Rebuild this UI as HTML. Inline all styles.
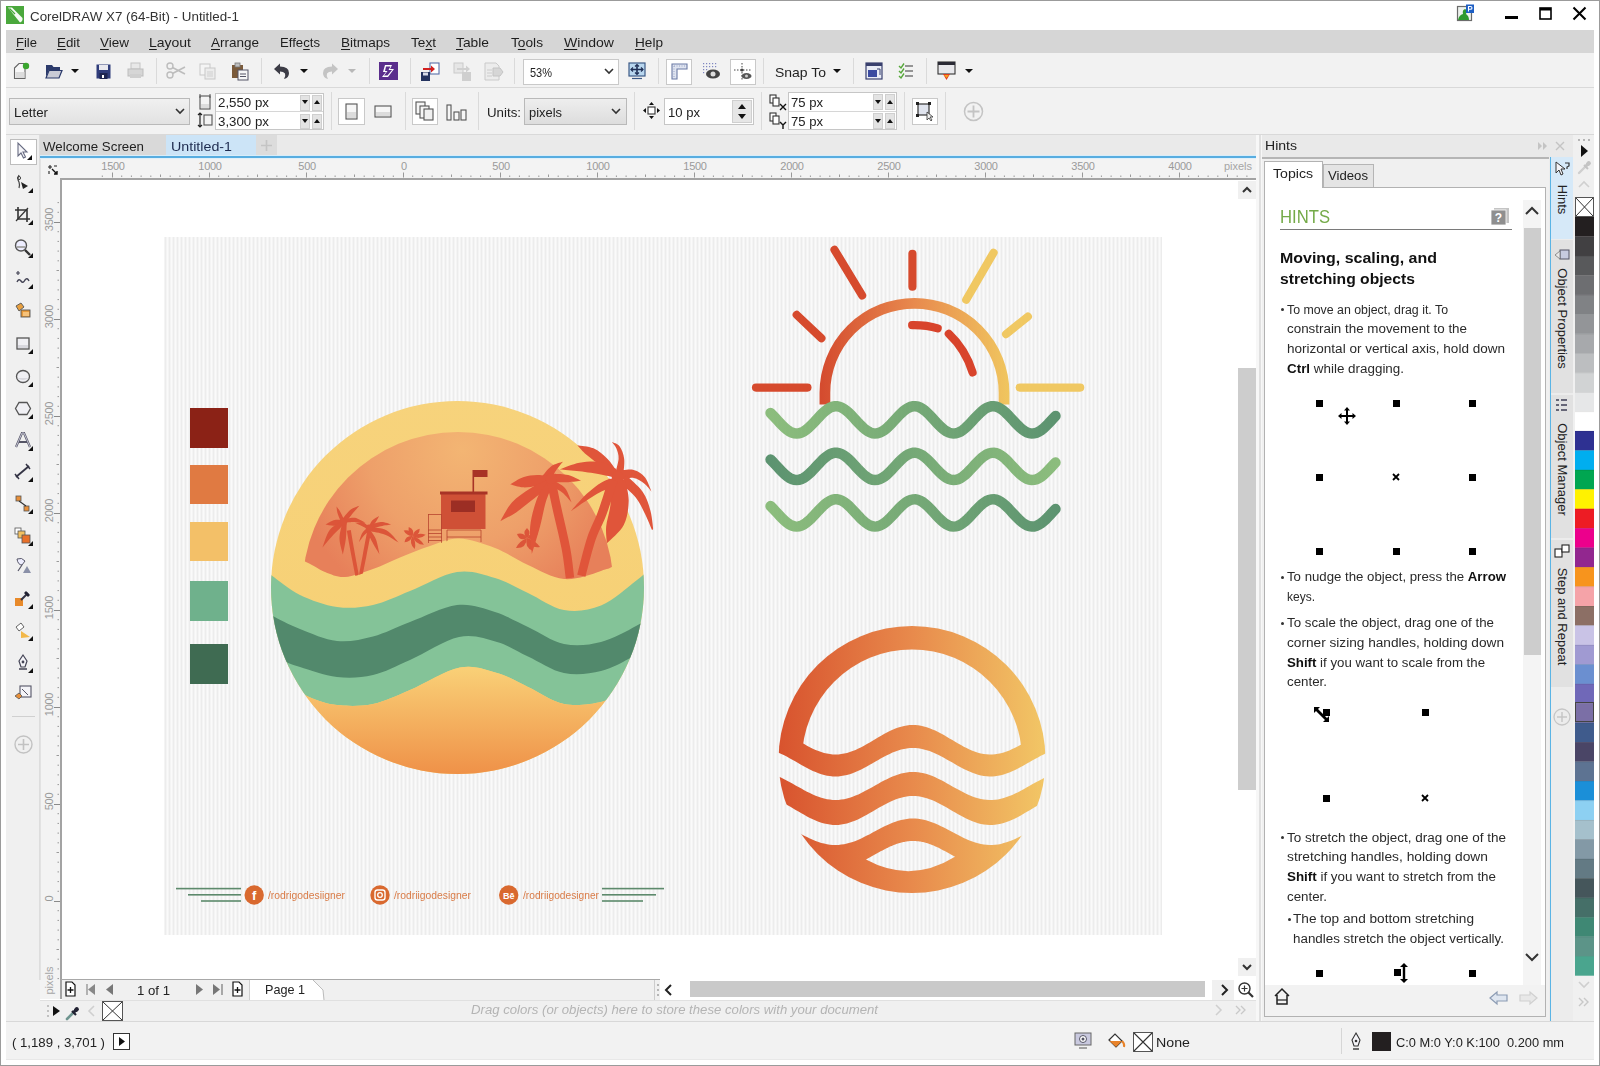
<!DOCTYPE html><html><head><meta charset="utf-8"><style>
html,body{margin:0;padding:0;}
body{width:1600px;height:1066px;position:relative;overflow:hidden;background:#fff;font-family:"Liberation Sans",sans-serif;}
.a{position:absolute;}
.t{white-space:nowrap;transform-origin:0 0;}
svg{overflow:visible;}
</style></head><body>
<div class="a" style="left:0px;top:0px;width:1600px;height:1066px;background:#ffffff;"></div>
<div class="a" style="left:0px;top:0px;width:1600px;height:1px;background:#9b9b9b;"></div>
<div class="a" style="left:0px;top:0px;width:1px;height:1066px;background:#9b9b9b;"></div>
<div class="a" style="left:1599px;top:0px;width:1px;height:1066px;background:#9b9b9b;"></div>
<div class="a" style="left:0px;top:1065px;width:1600px;height:1px;background:#9b9b9b;"></div>
<svg class="a" style="left:6px;top:6px;" width="18" height="18" viewBox="0 0 18 18"><rect x="0" y="0" width="18" height="18" fill="#4aa83c"/><path d="M2 1.5 L6 1.5 L16.5 12 Q17 15 14 16.5 Z" fill="#ffffff" opacity="0.95"/><path d="M3.5 2.5 L9 8" stroke="#4aa83c" stroke-width="1.3"/></svg>
<div id="t0" class="a t" style="left:30px;top:9.60px;font-size:13px;line-height:13px;color:#333;transform:scaleX(1.0284);">CorelDRAW X7 (64-Bit) - Untitled-1</div>
<svg class="a" style="left:1456px;top:4px;" width="20" height="18" viewBox="0 0 20 18"><rect x="1.5" y="2.5" width="14" height="14" fill="#eef2ee" stroke="#6b6b6b" stroke-width="1.2"/><path d="M2,16 Q3,11 7,10 Q6,6 9,5 Q12,6 10,10 Q13,12 13,16 Z" fill="#2e9a2e"/><rect x="10" y="0.5" width="8" height="8.5" fill="#1e5fc4"/><path d="M12.5,7.5 L12.5,2.5 L14.5,2.5 Q16,2.5 16,4 Q16,5.3 14.5,5.3 L12.5,5.3" stroke="#fff" stroke-width="1.1" fill="none"/></svg>
<div class="a" style="left:1505px;top:16px;width:13px;height:3px;background:#000;"></div>
<svg class="a" style="left:1539px;top:7px;" width="13" height="13" viewBox="0 0 13 13"><rect x="1" y="1" width="11" height="11" fill="none" stroke="#000" stroke-width="1.6"/><rect x="1" y="1" width="11" height="2.5" fill="#000"/></svg>
<svg class="a" style="left:1572px;top:6px;" width="15" height="15" viewBox="0 0 15 15"><path d="M1.5 1.5 L13.5 13.5 M13.5 1.5 L1.5 13.5" stroke="#000" stroke-width="2.1"/></svg>
<div class="a" style="left:6px;top:30px;width:1588px;height:23px;background:#d6d6d6;"></div>
<div id="t1" class="a t" style="left:16px;top:35.67px;font-size:13.5px;line-height:13.5px;color:#1e1e1e;transform:scaleX(0.9648);"><u style="text-decoration-thickness:1px;text-underline-offset:2px;">F</u>ile</div>
<div id="t2" class="a t" style="left:57px;top:35.67px;font-size:13.5px;line-height:13.5px;color:#1e1e1e;transform:scaleX(0.9879);"><u style="text-decoration-thickness:1px;text-underline-offset:2px;">E</u>dit</div>
<div id="t3" class="a t" style="left:100px;top:35.67px;font-size:13.5px;line-height:13.5px;color:#1e1e1e;transform:scaleX(0.9989);"><u style="text-decoration-thickness:1px;text-underline-offset:2px;">V</u>iew</div>
<div id="t4" class="a t" style="left:149px;top:35.67px;font-size:13.5px;line-height:13.5px;color:#1e1e1e;transform:scaleX(1.0358);"><u style="text-decoration-thickness:1px;text-underline-offset:2px;">L</u>ayout</div>
<div id="t5" class="a t" style="left:211px;top:35.67px;font-size:13.5px;line-height:13.5px;color:#1e1e1e;transform:scaleX(0.9990);"><u style="text-decoration-thickness:1px;text-underline-offset:2px;">A</u>rrange</div>
<div id="t6" class="a t" style="left:280px;top:35.67px;font-size:13.5px;line-height:13.5px;color:#1e1e1e;transform:scaleX(0.9745);">Effe<u style="text-decoration-thickness:1px;text-underline-offset:2px;">c</u>ts</div>
<div id="t7" class="a t" style="left:341px;top:35.67px;font-size:13.5px;line-height:13.5px;color:#1e1e1e;transform:scaleX(1.0045);"><u style="text-decoration-thickness:1px;text-underline-offset:2px;">B</u>itmaps</div>
<div id="t8" class="a t" style="left:411px;top:35.67px;font-size:13.5px;line-height:13.5px;color:#1e1e1e;transform:scaleX(1.0088);">Te<u style="text-decoration-thickness:1px;text-underline-offset:2px;">x</u>t</div>
<div id="t9" class="a t" style="left:456px;top:35.67px;font-size:13.5px;line-height:13.5px;color:#1e1e1e;transform:scaleX(1.0223);"><u style="text-decoration-thickness:1px;text-underline-offset:2px;">T</u>able</div>
<div id="t10" class="a t" style="left:511px;top:35.67px;font-size:13.5px;line-height:13.5px;color:#1e1e1e;transform:scaleX(1.0149);">T<u style="text-decoration-thickness:1px;text-underline-offset:2px;">o</u>ols</div>
<div id="t11" class="a t" style="left:564px;top:35.67px;font-size:13.5px;line-height:13.5px;color:#1e1e1e;transform:scaleX(1.0410);"><u style="text-decoration-thickness:1px;text-underline-offset:2px;">W</u>indow</div>
<div id="t12" class="a t" style="left:635px;top:35.67px;font-size:13.5px;line-height:13.5px;color:#1e1e1e;transform:scaleX(1.0084);"><u style="text-decoration-thickness:1px;text-underline-offset:2px;">H</u>elp</div>
<div class="a" style="left:6px;top:53px;width:1588px;height:34px;background:#f2f2f2;"></div>
<div class="a" style="left:6px;top:87px;width:1588px;height:1px;background:#d9d9d9;"></div>
<div class="a" style="left:6px;top:88px;width:1588px;height:46px;background:#f2f2f2;"></div>
<div class="a" style="left:6px;top:134px;width:1588px;height:1px;background:#d9d9d9;"></div>
<svg class="a" style="left:13px;top:62px;" width="17" height="18" viewBox="0 0 17 18"><path d="M1.5,6 L6,1.5 L12,1.5 L12,16.5 L1.5,16.5 Z" fill="#f7f7f7" stroke="#666" stroke-width="1.1"/><rect x="2.5" y="10" width="9" height="6" fill="#dcdcdc"/><circle cx="13" cy="4" r="3.2" fill="#3aa52e"/></svg>
<svg class="a" style="left:45px;top:63px;" width="18" height="16" viewBox="0 0 18 16"><path d="M1,2 L7,2 L8.5,4 L15,4 L15,7 L4,7 L1,14 Z" fill="#2b3a6b"/><path d="M1,15 L4,7.5 L17,7.5 L14,15 Z" fill="#c9cbd6" stroke="#2b3a6b" stroke-width="1.2"/></svg>
<svg class="a" style="left:71px;top:69px;" width="8" height="5" viewBox="0 0 8 5"><path d="M0,0 L8,0 L4,4 Z" fill="#111"/></svg>
<svg class="a" style="left:96px;top:64px;" width="15" height="15" viewBox="0 0 15 15"><rect x="0.5" y="0.5" width="14" height="14" fill="#2f3c7a"/><rect x="3" y="1" width="9" height="5" fill="#e8e8ee"/><rect x="3.5" y="9" width="8" height="6" fill="#1d2550"/><rect x="6" y="11" width="2" height="3" fill="#fff"/></svg>
<svg class="a" style="left:127px;top:62px;" width="17" height="17" viewBox="0 0 17 17"><rect x="4" y="1" width="9" height="6" fill="#e8e8e8" stroke="#c4c4c4"/><rect x="1" y="7" width="15" height="7" fill="#d6d6d6" stroke="#bdbdbd"/><rect x="3" y="12" width="11" height="4" fill="#cfcfcf"/></svg>
<div class="a" style="left:156px;top:58px;width:1px;height:26px;background:#dadada;"></div>
<svg class="a" style="left:166px;top:62px;" width="20" height="17" viewBox="0 0 20 17"><circle cx="4" cy="4" r="3" fill="none" stroke="#bdbdbd" stroke-width="1.4"/><circle cx="4" cy="13" r="3" fill="none" stroke="#bdbdbd" stroke-width="1.4"/><path d="M6.5,5.5 L19,12 M6.5,11.5 L19,5" stroke="#bdbdbd" stroke-width="1.6"/></svg>
<svg class="a" style="left:199px;top:63px;" width="18" height="17" viewBox="0 0 18 17"><rect x="1" y="1" width="10" height="11" fill="#f4f4f4" stroke="#c8c8c8"/><rect x="6" y="5" width="10" height="11" fill="#ececec" stroke="#c8c8c8"/><path d="M8,9 L14,9 M8,11 L14,11 M8,13 L14,13" stroke="#cfcfcf"/></svg>
<svg class="a" style="left:231px;top:62px;" width="18" height="18" viewBox="0 0 18 18"><rect x="1" y="3" width="11" height="13" fill="#7a5a3a"/><rect x="4" y="1" width="5" height="4" fill="#bfbfbf" stroke="#777" stroke-width="0.8"/><rect x="7" y="8" width="10" height="10" fill="#f6f6f6" stroke="#556" stroke-width="1"/><path d="M9,12 L15,12 M9,14.5 L15,14.5" stroke="#556"/></svg>
<div class="a" style="left:261px;top:58px;width:1px;height:26px;background:#dadada;"></div>
<svg class="a" style="left:272px;top:62px;" width="19" height="18" viewBox="0 0 19 18"><path d="M2,7 L8,1.5 L8,4.5 Q17,4.5 17,11 Q17,16 12,17 Q14,14 13,11.5 Q11.5,9.5 8,9.5 L8,12.5 Z" fill="#3c3c46"/></svg>
<svg class="a" style="left:300px;top:69px;" width="8" height="5" viewBox="0 0 8 5"><path d="M0,0 L8,0 L4,4 Z" fill="#111"/></svg>
<svg class="a" style="left:321px;top:62px;" width="19" height="18" viewBox="0 0 19 18"><path d="M17,7 L11,1.5 L11,4.5 Q2,4.5 2,11 Q2,16 7,17 Q5,14 6,11.5 Q7.5,9.5 11,9.5 L11,12.5 Z" fill="#c4c4c4"/></svg>
<svg class="a" style="left:348px;top:69px;" width="8" height="5" viewBox="0 0 8 5"><path d="M0,0 L8,0 L4,4 Z" fill="#b8b8b8"/></svg>
<div class="a" style="left:369px;top:58px;width:1px;height:26px;background:#dadada;"></div>
<svg class="a" style="left:379px;top:62px;" width="19" height="18" viewBox="0 0 19 18"><rect x="0" y="0" width="19" height="18" fill="#5a2d8c"/><path d="M6,3 L13,3 L11,7 L15,7 L9,15 L3,15 L7,10 L4,10 Z" fill="#fff"/><path d="M7,4.5 L11.5,4.5 L9.5,8 L13,8 L8.5,13.5 L5,13.5 L8.5,9 L6,9 Z" fill="#5a2d8c"/></svg>
<div class="a" style="left:410px;top:58px;width:1px;height:26px;background:#dadada;"></div>
<svg class="a" style="left:420px;top:62px;" width="21" height="19" viewBox="0 0 21 19"><rect x="10" y="1" width="9" height="11" fill="#fff" stroke="#5a6fa8" stroke-width="1.1"/><path d="M3,6 L11,6 L11,3.5 L15,7 L11,10.5 L11,8 L3,8 Z" fill="#d21f1f"/><rect x="1" y="10" width="9" height="9" fill="#24335f"/><rect x="3" y="10.5" width="5" height="3" fill="#d8dbe8"/></svg>
<svg class="a" style="left:452px;top:62px;" width="20" height="19" viewBox="0 0 20 19"><rect x="2" y="1" width="9" height="10" fill="#e6e6e6" stroke="#cacaca"/><path d="M5,6 L14,6 L14,3.5 L18,7 L14,10.5 L14,8 L5,8 Z" fill="#d0d0d0"/><rect x="10" y="10" width="9" height="9" fill="#cfcfcf"/></svg>
<svg class="a" style="left:484px;top:62px;" width="20" height="19" viewBox="0 0 20 19"><path d="M1,1 L12,1 L15,4 L15,18 L1,18 Z" fill="#ececec" stroke="#cacaca"/><path d="M9,6 L16,6 L19,10 L16,14 L9,14 Z" fill="#d6d6d6" stroke="#c4c4c4"/><path d="M3,8 L8,8 M3,11 L8,11 M3,14 L8,14" stroke="#cccccc"/></svg>
<div class="a" style="left:514px;top:58px;width:1px;height:26px;background:#dadada;"></div>
<div class="a" style="left:523px;top:59px;width:96px;height:26px;background:#ffffff;border:1px solid #c9c9c9;box-sizing:border-box;"></div>
<div id="t13" class="a t" style="left:530px;top:66.00px;font-size:13px;line-height:13px;color:#222;transform:scaleX(0.8451);">53%</div>
<svg class="a" style="left:604px;top:68px;" width="10" height="7" viewBox="0 0 10 7"><path d="M1,1 L5,5 L9,1" stroke="#333" stroke-width="1.6" fill="none"/></svg>
<svg class="a" style="left:628px;top:62px;" width="18" height="19" viewBox="0 0 18 19"><rect x="1" y="1" width="16" height="13" fill="#b9d7ef" stroke="#3d5a86" stroke-width="1.2"/><path d="M9,3 L9,12 M3,7.5 L15,7.5" stroke="#1f2f55" stroke-width="1.6"/><path d="M7,4.5 L9,2.5 L11,4.5 M7,10.5 L9,12.5 L11,10.5 M5,5.5 L3,7.5 L5,9.5 M13,5.5 L15,7.5 L13,9.5" stroke="#1f2f55" stroke-width="1.2" fill="none"/><path d="M4,16.5 L14,16.5" stroke="#3d5a86" stroke-width="1.2"/></svg>
<div class="a" style="left:658px;top:58px;width:1px;height:26px;background:#dadada;"></div>
<div class="a" style="left:666px;top:59px;width:26px;height:26px;background:#ffffff;border:1px solid #c9c9c9;box-sizing:border-box;"></div>
<svg class="a" style="left:671px;top:63px;" width="17" height="17" viewBox="0 0 17 17"><path d="M1,1 L16,1 L16,6 L6,6 L6,16 L1,16 Z" fill="#dfe4f0" stroke="#6b7aa5" stroke-width="1.1"/><path d="M3,3 L14,3 M3,3 L3,14" stroke="#9aa6c8" stroke-width="1" stroke-dasharray="1,1.5"/></svg>
<svg class="a" style="left:702px;top:62px;" width="19" height="18" viewBox="0 0 19 18"><g fill="#7f86c0"><rect x="1" y="1" width="1.2" height="1.2"/><rect x="4" y="1" width="1.2" height="1.2"/><rect x="7" y="1" width="1.2" height="1.2"/><rect x="10" y="1" width="1.2" height="1.2"/><rect x="13" y="1" width="1.2" height="1.2"/><rect x="1" y="4" width="1.2" height="1.2"/><rect x="4" y="4" width="1.2" height="1.2"/><rect x="7" y="4" width="1.2" height="1.2"/><rect x="10" y="4" width="1.2" height="1.2"/><rect x="13" y="4" width="1.2" height="1.2"/><rect x="1" y="7" width="1.2" height="1.2"/><rect x="4" y="7" width="1.2" height="1.2"/><rect x="1" y="10" width="1.2" height="1.2"/></g><ellipse cx="11" cy="12" rx="7" ry="4.5" fill="#444"/><circle cx="11" cy="12" r="2.5" fill="#ddd"/></svg>
<div class="a" style="left:730px;top:59px;width:26px;height:26px;background:#ffffff;border:1px solid #c9c9c9;box-sizing:border-box;"></div>
<svg class="a" style="left:733px;top:62px;" width="20" height="20" viewBox="0 0 20 20"><path d="M9,1 L9,19 M1,8 L18,8" stroke="#444" stroke-width="1" stroke-dasharray="1.5,1.5"/><circle cx="9" cy="8" r="1.6" fill="#444"/><ellipse cx="13.5" cy="14" rx="5" ry="3" fill="#555"/><circle cx="13.5" cy="14" r="1.5" fill="#ccc"/></svg>
<div class="a" style="left:763px;top:58px;width:1px;height:26px;background:#dadada;"></div>
<div id="t14" class="a t" style="left:775px;top:66.00px;font-size:13px;line-height:13px;color:#222;transform:scaleX(1.0744);">Snap To</div>
<svg class="a" style="left:833px;top:69px;" width="8" height="5" viewBox="0 0 8 5"><path d="M0,0 L8,0 L4,4 Z" fill="#111"/></svg>
<div class="a" style="left:853px;top:58px;width:1px;height:26px;background:#dadada;"></div>
<svg class="a" style="left:865px;top:62px;" width="18" height="18" viewBox="0 0 18 18"><rect x="1" y="1" width="16" height="16" fill="#e9ecf6" stroke="#39406e" stroke-width="1.2"/><rect x="1" y="1" width="16" height="3" fill="#39406e"/><rect x="3" y="8" width="9" height="7" fill="#3a4aa0"/><path d="M12,7 L15,7 L15,13" stroke="#39406e" fill="none"/></svg>
<svg class="a" style="left:897px;top:62px;" width="17" height="18" viewBox="0 0 17 18"><path d="M2,4 L4,6 L7,1.5 M2,9 L4,11 L7,6.5 M2,14 L4,16 L7,11.5" stroke="#56a83a" stroke-width="1.4" fill="none"/><path d="M8,4 L16,4 M8,9 L16,9 M8,14 L16,14" stroke="#777" stroke-width="1.3"/></svg>
<div class="a" style="left:926px;top:58px;width:1px;height:26px;background:#dadada;"></div>
<svg class="a" style="left:937px;top:61px;" width="19" height="20" viewBox="0 0 19 20"><rect x="1" y="1" width="17" height="12" fill="#e8e8ec" stroke="#333" stroke-width="1.1"/><rect x="1" y="1" width="17" height="3" fill="#2a2a35"/><path d="M6,13 L13,13 L9.5,19 Z" fill="#e23a1e"/><path d="M7,14 L12,14 L9.5,17" fill="#f6a21e"/></svg>
<svg class="a" style="left:965px;top:69px;" width="8" height="5" viewBox="0 0 8 5"><path d="M0,0 L8,0 L4,4 Z" fill="#111"/></svg>
<div class="a" style="left:9px;top:98px;width:181px;height:27px;background:linear-gradient(#f0f0f0,#e2e2e2);border:1px solid #b9b9b9;box-sizing:border-box;"></div>
<div id="t15" class="a t" style="left:14px;top:105.57px;font-size:13.5px;line-height:13.5px;color:#222;transform:scaleX(0.9846);">Letter</div>
<svg class="a" style="left:175px;top:108px;" width="10" height="7" viewBox="0 0 10 7"><path d="M1,1 L5,5 L9,1" stroke="#333" stroke-width="1.6" fill="none"/></svg>
<svg class="a" style="left:198px;top:93px;" width="14" height="18" viewBox="0 0 14 18"><rect x="2" y="3" width="10" height="13" fill="#f4f4f4" stroke="#555" stroke-width="1.1"/><path d="M2,1 L2,5 M12,1 L12,5" stroke="#555"/><rect x="3" y="11" width="8" height="4" fill="#ddd"/></svg>
<svg class="a" style="left:197px;top:112px;" width="16" height="16" viewBox="0 0 16 16"><path d="M3,1 L3,15 M1,3 L3,1 L5,3 M1,13 L3,15 L5,13" stroke="#222" stroke-width="1.2" fill="none"/><rect x="7" y="3" width="8" height="10" fill="#f4f4f4" stroke="#555" stroke-width="1.1"/></svg>
<div class="a" style="left:215px;top:93px;width:109px;height:37px;background:#ffffff;border:1px solid #c6c6c6;box-sizing:border-box;"></div>
<div class="a" style="left:216px;top:111px;width:107px;height:1px;background:#d6d6d6;"></div>
<div id="t16" class="a t" style="left:218px;top:96.00px;font-size:13px;line-height:13px;color:#222;transform:scaleX(1.0226);">2,550 px</div>
<div class="a" style="left:300px;top:95.0px;width:10px;height:15.5px;background:#e3e3e3;border:1px solid #cfcfcf;box-sizing:border-box;"></div>
<svg class="a" style="left:302px;top:100.25px;" width="6" height="4" viewBox="0 0 6 4"><path d="M0,0 L6,0 L3,4 Z" fill="#111"/></svg>
<div class="a" style="left:312px;top:95.0px;width:10px;height:15.5px;background:#e3e3e3;border:1px solid #cfcfcf;box-sizing:border-box;"></div>
<svg class="a" style="left:314px;top:100.25px;" width="6" height="4" viewBox="0 0 6 4"><path d="M0,4 L6,4 L3,0 Z" fill="#111"/></svg>
<div id="t17" class="a t" style="left:218px;top:114.50px;font-size:13px;line-height:13px;color:#222;transform:scaleX(1.0226);">3,300 px</div>
<div class="a" style="left:300px;top:113.5px;width:10px;height:15.5px;background:#e3e3e3;border:1px solid #cfcfcf;box-sizing:border-box;"></div>
<svg class="a" style="left:302px;top:118.75px;" width="6" height="4" viewBox="0 0 6 4"><path d="M0,0 L6,0 L3,4 Z" fill="#111"/></svg>
<div class="a" style="left:312px;top:113.5px;width:10px;height:15.5px;background:#e3e3e3;border:1px solid #cfcfcf;box-sizing:border-box;"></div>
<svg class="a" style="left:314px;top:118.75px;" width="6" height="4" viewBox="0 0 6 4"><path d="M0,4 L6,4 L3,0 Z" fill="#111"/></svg>
<div class="a" style="left:331px;top:92px;width:1px;height:38px;background:#dadada;"></div>
<div class="a" style="left:338px;top:98px;width:27px;height:27px;background:#ffffff;border:1px solid #c9c9c9;box-sizing:border-box;"></div>
<svg class="a" style="left:345px;top:103px;" width="13" height="17" viewBox="0 0 13 17"><rect x="1" y="1" width="11" height="15" fill="#f6f6f6" stroke="#555" stroke-width="1.1"/><rect x="2" y="9" width="9" height="6" fill="#dcdcdc"/></svg>
<svg class="a" style="left:374px;top:105px;" width="18" height="13" viewBox="0 0 18 13"><rect x="1" y="1" width="16" height="11" fill="#f6f6f6" stroke="#555" stroke-width="1.1"/><rect x="2" y="7" width="14" height="4" fill="#dcdcdc"/></svg>
<div class="a" style="left:405px;top:92px;width:1px;height:38px;background:#dadada;"></div>
<div class="a" style="left:412px;top:98px;width:26px;height:27px;background:#ffffff;border:1px solid #c9c9c9;box-sizing:border-box;"></div>
<svg class="a" style="left:415px;top:101px;" width="20" height="20" viewBox="0 0 20 20"><rect x="1" y="1" width="9" height="12" fill="#f6f6f6" stroke="#555" stroke-width="1.1"/><rect x="5" y="5" width="9" height="12" fill="#f6f6f6" stroke="#555" stroke-width="1.1"/><rect x="9" y="8" width="9" height="11" fill="#f0f0f0" stroke="#555" stroke-width="1.1"/></svg>
<svg class="a" style="left:446px;top:104px;" width="21" height="17" viewBox="0 0 21 17"><rect x="1" y="1" width="4" height="15" fill="#f6f6f6" stroke="#555" stroke-width="1.1"/><rect x="8" y="8" width="5" height="8" fill="#f6f6f6" stroke="#555" stroke-width="1.1"/><rect x="15" y="6" width="5" height="10" fill="#f6f6f6" stroke="#555" stroke-width="1.1"/></svg>
<div class="a" style="left:478px;top:92px;width:1px;height:38px;background:#dadada;"></div>
<div id="t18" class="a t" style="left:487px;top:105.57px;font-size:13.5px;line-height:13.5px;color:#222;transform:scaleX(0.9851);">Units:</div>
<div class="a" style="left:524px;top:98px;width:103px;height:27px;background:linear-gradient(#eeeeee,#dddddd);border:1px solid #b9b9b9;box-sizing:border-box;"></div>
<div id="t19" class="a t" style="left:529px;top:105.57px;font-size:13.5px;line-height:13.5px;color:#222;transform:scaleX(0.9561);">pixels</div>
<svg class="a" style="left:611px;top:108px;" width="10" height="7" viewBox="0 0 10 7"><path d="M1,1 L5,5 L9,1" stroke="#333" stroke-width="1.6" fill="none"/></svg>
<div class="a" style="left:634px;top:92px;width:1px;height:38px;background:#dadada;"></div>
<svg class="a" style="left:643px;top:102px;" width="17" height="17" viewBox="0 0 17 17"><rect x="5" y="5" width="7" height="7" fill="#fff" stroke="#333" stroke-width="1.1"/><path d="M8.5,0 L11,3 L6,3 Z M8.5,17 L11,14 L6,14 Z M0,8.5 L3,6 L3,11 Z M17,8.5 L14,6 L14,11 Z" fill="#111"/></svg>
<div class="a" style="left:664px;top:98px;width:90px;height:27px;background:#ffffff;border:1px solid #c6c6c6;box-sizing:border-box;"></div>
<div id="t20" class="a t" style="left:668px;top:106.00px;font-size:13px;line-height:13px;color:#222;transform:scaleX(1.0059);">10 px</div>
<div class="a" style="left:732px;top:100px;width:20px;height:23px;background:#e6e6e6;border:1px solid #cfcfcf;box-sizing:border-box;"></div>
<svg class="a" style="left:738px;top:104px;" width="8" height="5" viewBox="0 0 8 5"><path d="M0,5 L8,5 L4,0 Z" fill="#111"/></svg>
<svg class="a" style="left:738px;top:114px;" width="8" height="5" viewBox="0 0 8 5"><path d="M0,0 L8,0 L4,5 Z" fill="#111"/></svg>
<div class="a" style="left:761px;top:92px;width:1px;height:38px;background:#dadada;"></div>
<svg class="a" style="left:769px;top:94px;" width="18" height="17" viewBox="0 0 18 17"><rect x="1" y="1" width="6" height="8" fill="#fff" stroke="#333" stroke-width="1.1"/><rect x="4" y="4" width="6" height="8" fill="#fff" stroke="#333" stroke-width="1.1"/><path d="M11,10 L17,16 M17,10 L11,16" stroke="#111" stroke-width="1.4"/></svg>
<svg class="a" style="left:769px;top:112px;" width="18" height="17" viewBox="0 0 18 17"><rect x="1" y="1" width="6" height="8" fill="#fff" stroke="#333" stroke-width="1.1"/><rect x="4" y="4" width="6" height="8" fill="#fff" stroke="#333" stroke-width="1.1"/><path d="M11,10 L14,13 L17,10 M14,13 L14,17" stroke="#111" stroke-width="1.4" fill="none"/></svg>
<div class="a" style="left:788px;top:92px;width:109px;height:38px;background:#ffffff;border:1px solid #c6c6c6;box-sizing:border-box;"></div>
<div class="a" style="left:789px;top:111px;width:107px;height:1px;background:#d6d6d6;"></div>
<div id="t21" class="a t" style="left:791px;top:95.50px;font-size:13px;line-height:13px;color:#222;transform:scaleX(1.0059);">75 px</div>
<div class="a" style="left:873px;top:94.0px;width:10px;height:16.0px;background:#e3e3e3;border:1px solid #cfcfcf;box-sizing:border-box;"></div>
<svg class="a" style="left:875px;top:99.5px;" width="6" height="4" viewBox="0 0 6 4"><path d="M0,0 L6,0 L3,4 Z" fill="#111"/></svg>
<div class="a" style="left:885px;top:94.0px;width:10px;height:16.0px;background:#e3e3e3;border:1px solid #cfcfcf;box-sizing:border-box;"></div>
<svg class="a" style="left:887px;top:99.5px;" width="6" height="4" viewBox="0 0 6 4"><path d="M0,4 L6,4 L3,0 Z" fill="#111"/></svg>
<div id="t22" class="a t" style="left:791px;top:114.50px;font-size:13px;line-height:13px;color:#222;transform:scaleX(1.0059);">75 px</div>
<div class="a" style="left:873px;top:113.0px;width:10px;height:16.0px;background:#e3e3e3;border:1px solid #cfcfcf;box-sizing:border-box;"></div>
<svg class="a" style="left:875px;top:118.5px;" width="6" height="4" viewBox="0 0 6 4"><path d="M0,0 L6,0 L3,4 Z" fill="#111"/></svg>
<div class="a" style="left:885px;top:113.0px;width:10px;height:16.0px;background:#e3e3e3;border:1px solid #cfcfcf;box-sizing:border-box;"></div>
<svg class="a" style="left:887px;top:118.5px;" width="6" height="4" viewBox="0 0 6 4"><path d="M0,4 L6,4 L3,0 Z" fill="#111"/></svg>
<div class="a" style="left:904px;top:92px;width:1px;height:38px;background:#dadada;"></div>
<div class="a" style="left:912px;top:98px;width:26px;height:27px;background:#ffffff;border:1px solid #c9c9c9;box-sizing:border-box;"></div>
<svg class="a" style="left:915px;top:101px;" width="20" height="20" viewBox="0 0 20 20"><rect x="3" y="3" width="11" height="11" fill="#e0e4ee" stroke="#333" stroke-width="1.2"/><rect x="1" y="1" width="3" height="3" fill="#222"/><rect x="13" y="1" width="3" height="3" fill="#222"/><rect x="1" y="13" width="3" height="3" fill="#222"/><path d="M12,11 L12,19 L14,17 L16,20 L17,19 L15,16 L18,16 Z" fill="#eee" stroke="#333" stroke-width="0.8"/></svg>
<div class="a" style="left:945px;top:92px;width:1px;height:38px;background:#dadada;"></div>
<svg class="a" style="left:963px;top:101px;" width="21" height="21" viewBox="0 0 21 21"><circle cx="10.5" cy="10.5" r="9" fill="none" stroke="#c4c4c4" stroke-width="1.5"/><path d="M10.5,4.5 L10.5,16.5 M4.5,10.5 L16.5,10.5" stroke="#c4c4c4" stroke-width="1.8"/></svg>
<div class="a" style="left:6px;top:135px;width:34px;height:886px;background:#f0f0f0;"></div>
<div class="a" style="left:39px;top:135px;width:1px;height:845px;background:#dddddd;"></div>
<div class="a" style="left:10px;top:139px;width:27px;height:26px;background:#ffffff;border:1px solid #bdbdbd;box-sizing:border-box;"></div>
<svg class="a" style="left:13px;top:141px;" width="21" height="21" viewBox="0 0 21 21"><path d="M5,2 L5,15 L8,12 L10.5,17 L12.5,16 L10,11 L14,11 Z" fill="#f4f4f8" stroke="#666a80" stroke-width="1.1"/><path d="M19,19 L19,14 L14,19 Z" fill="#111"/></svg>
<svg class="a" style="left:13px;top:173px;" width="21" height="21" viewBox="0 0 21 21"><path d="M6,2 Q4,6 6,9 Q7,12 6,15" stroke="#444" fill="none" stroke-width="1.2"/><circle cx="6" cy="5" r="1.6" fill="none" stroke="#444"/><path d="M8,9 L15,13 L10,16 Z" fill="#222"/><path d="M20,20 L20,15 L15,20 Z" fill="#111"/></svg>
<svg class="a" style="left:13px;top:205px;" width="21" height="21" viewBox="0 0 21 21"><path d="M5,2 L5,14 L17,14 M2,5 L14,5 L14,17" stroke="#333" stroke-width="1.6" fill="none"/><path d="M3,16 L15,3" stroke="#333" stroke-width="1.2"/><path d="M20,20 L20,15 L15,20 Z" fill="#111"/></svg>
<svg class="a" style="left:13px;top:238px;" width="21" height="21" viewBox="0 0 21 21"><circle cx="8" cy="7.5" r="5.5" fill="#eef" stroke="#555" stroke-width="1.4"/><path d="M4,9 L12,9" stroke="#aaa" stroke-width="2"/><path d="M12,12 L17,17" stroke="#333" stroke-width="2.4"/><path d="M20,20 L20,15 L15,20 Z" fill="#111"/></svg>
<svg class="a" style="left:13px;top:269px;" width="21" height="21" viewBox="0 0 21 21"><path d="M3,4 L7,4 M5,2 L5,6" stroke="#445" stroke-width="1.2"/><path d="M4,13 Q6,9 8,12 Q10,15 12,11 Q14,8 16,12" stroke="#445" stroke-width="1.4" fill="none"/><path d="M20,20 L20,15 L15,20 Z" fill="#111"/></svg>
<svg class="a" style="left:13px;top:301px;" width="21" height="21" viewBox="0 0 21 21"><path d="M3,5 L8,2 L11,6 L6,10 Z" fill="#e8a040" stroke="#555" stroke-width="0.9"/><rect x="8" y="9" width="9" height="7" fill="#e89a3a" stroke="#555" stroke-width="0.9"/><rect x="10" y="11" width="6" height="4" fill="#f6c27a"/></svg>
<svg class="a" style="left:13px;top:334px;" width="21" height="21" viewBox="0 0 21 21"><rect x="4" y="4" width="12" height="11" fill="#f0f0f4" stroke="#555" stroke-width="1.3"/><rect x="5" y="11" width="10" height="3" fill="#d8d8de"/><path d="M20,20 L20,15 L15,20 Z" fill="#111"/></svg>
<svg class="a" style="left:13px;top:367px;" width="21" height="21" viewBox="0 0 21 21"><ellipse cx="10" cy="9.5" rx="6.5" ry="6" fill="#f0f0f4" stroke="#555" stroke-width="1.3"/><path d="M4.5,11 Q10,15 15.5,11" fill="#d8d8de"/><path d="M20,20 L20,15 L15,20 Z" fill="#111"/></svg>
<svg class="a" style="left:13px;top:399px;" width="21" height="21" viewBox="0 0 21 21"><path d="M6,3.5 L14,3.5 L17.5,9.5 L14,15.5 L6,15.5 L2.5,9.5 Z" fill="#f0f0f4" stroke="#555" stroke-width="1.3"/><path d="M20,20 L20,15 L15,20 Z" fill="#111"/></svg>
<svg class="a" style="left:13px;top:431px;" width="21" height="21" viewBox="0 0 21 21"><path d="M3,16 L9,2 L11,2 L17,16 M5.5,11 L14.5,11" stroke="#556" stroke-width="2.2" fill="none"/><path d="M3,16 L9,2 L11,2 L17,16" stroke="#dde" stroke-width="0.8" fill="none"/><path d="M20,20 L20,15 L15,20 Z" fill="#111"/></svg>
<svg class="a" style="left:13px;top:462px;" width="21" height="21" viewBox="0 0 21 21"><path d="M3,15 L16,4" stroke="#334" stroke-width="1.8"/><path d="M2,12 L6,17 M13,2 L17,7" stroke="#334" stroke-width="1.5"/><path d="M20,20 L20,15 L15,20 Z" fill="#111"/></svg>
<svg class="a" style="left:13px;top:494px;" width="21" height="21" viewBox="0 0 21 21"><rect x="3" y="2" width="5" height="5" fill="#e8903a" stroke="#555" stroke-width="0.8"/><rect x="11" y="12" width="5" height="5" fill="#e8903a" stroke="#555" stroke-width="0.8"/><path d="M6,7 L13,12" stroke="#333" stroke-width="1.1"/><path d="M20,20 L20,15 L15,20 Z" fill="#111"/></svg>
<svg class="a" style="left:13px;top:526px;" width="21" height="21" viewBox="0 0 21 21"><rect x="2" y="2" width="6" height="6" fill="#fff" stroke="#555" stroke-width="0.8"/><rect x="5" y="5" width="7" height="7" fill="#f2c060" stroke="#555" stroke-width="0.8"/><rect x="9" y="9" width="8" height="8" fill="#e8702a" stroke="#555" stroke-width="0.8"/><path d="M20,20 L20,15 L15,20 Z" fill="#111"/></svg>
<svg class="a" style="left:13px;top:556px;" width="21" height="21" viewBox="0 0 21 21"><path d="M4,3 Q9,1 12,5 L9,9 Q5,9 4,3 Z" fill="#eef" stroke="#556" stroke-width="1"/><path d="M9,9 L5,15" stroke="#556" stroke-width="1.2"/><path d="M10,17 L14,10 L18,17 Z" fill="#8a90a8"/></svg>
<svg class="a" style="left:13px;top:589px;" width="21" height="21" viewBox="0 0 21 21"><rect x="2" y="9" width="8" height="8" fill="#e88a2a"/><path d="M8,11 L15,4" stroke="#334" stroke-width="2"/><path d="M13,2 L17,6 L15,8 L11,4 Z" fill="#223"/><path d="M20,20 L20,15 L15,20 Z" fill="#111"/></svg>
<svg class="a" style="left:13px;top:621px;" width="21" height="21" viewBox="0 0 21 21"><path d="M3,6 L8,2 L11,6 L6,10 Z" fill="#fff" stroke="#555" stroke-width="0.9"/><path d="M8,10 L17,16 L8,17 Z" fill="#f2b84a"/><path d="M20,20 L20,15 L15,20 Z" fill="#111"/></svg>
<svg class="a" style="left:13px;top:653px;" width="21" height="21" viewBox="0 0 21 21"><path d="M10,2 L14,8 L12,14 L8,14 L6,8 Z" fill="#f4f4f8" stroke="#445" stroke-width="1.2"/><circle cx="10" cy="9" r="1.4" fill="#445"/><path d="M6,16 L14,16" stroke="#445" stroke-width="1.5"/><path d="M20,20 L20,15 L15,20 Z" fill="#111"/></svg>
<svg class="a" style="left:13px;top:683px;" width="21" height="21" viewBox="0 0 21 21"><rect x="7" y="3" width="11" height="11" fill="#f4f4f8" stroke="#556" stroke-width="1.1"/><path d="M9,6 L15,12" stroke="#556"/><path d="M2,13 L6,10 L9,13 L6,16 Z" fill="#e8903a" stroke="#555" stroke-width="0.8"/></svg>
<div class="a" style="left:12px;top:716px;width:23px;height:1px;background:#d0d0d0;"></div>
<svg class="a" style="left:13px;top:734px;" width="21" height="21" viewBox="0 0 21 21"><circle cx="10.5" cy="10.5" r="8.5" fill="none" stroke="#c2c2c2" stroke-width="1.4"/><path d="M10.5,5 L10.5,16 M5,10.5 L16,10.5" stroke="#c2c2c2" stroke-width="1.6"/></svg>
<div class="a" style="left:40px;top:135px;width:1216px;height:21px;background:#eaeaea;"></div>
<div class="a" style="left:40px;top:135px;width:126px;height:21px;background:#d9d9d9;"></div>
<div class="a" style="left:166px;top:135px;width:90px;height:21px;background:#cce4f7;"></div>
<div class="a" style="left:256px;top:135px;width:21px;height:21px;background:#dcdcdc;"></div>
<svg class="a" style="left:259px;top:138px;" width="15" height="15" viewBox="0 0 15 15"><path d="M7.5,2 L7.5,13 M2,7.5 L13,7.5" stroke="#c4c4c4" stroke-width="1.6"/></svg>
<div id="t23" class="a t" style="left:43px;top:140.00px;font-size:13px;line-height:13px;color:#222;transform:scaleX(1.0228);">Welcome Screen</div>
<div id="t24" class="a t" style="left:171px;top:140.00px;font-size:13px;line-height:13px;color:#1e2b4f;transform:scaleX(1.0963);">Untitled-1</div>
<div class="a" style="left:40px;top:155px;width:1216px;height:1px;background:#d8edf9;"></div>
<div class="a" style="left:40px;top:156px;width:1216px;height:2px;background:#58ade0;"></div>
<div class="a" style="left:40px;top:158px;width:1216px;height:1px;background:#dff0fa;"></div>
<div class="a" style="left:40px;top:159px;width:1216px;height:20px;background:#f3f3f3;"></div>
<div class="a" style="left:40px;top:179px;width:21px;height:820px;background:#f3f3f3;"></div>
<div class="a" style="left:40px;top:159px;width:1px;height:821px;background:#e2e2e2;"></div>
<svg class="a" style="left:46px;top:163px;" width="14" height="14" viewBox="0 0 14 14"><path d="M2,4 L6,4 M4,2 L4,6 M8,3 L11,3 M3,8 L3,11" stroke="#222" stroke-width="1.1"/><path d="M6,6 L11,11 M11,8 L11,11 L8,11" stroke="#111" stroke-width="1.4" fill="none"/></svg>
<svg class="a" style="left:0px;top:0px;" width="1600" height="1066" viewBox="0 0 1600 1066"><rect x="112" y="172.5" width="1" height="5" fill="#999"/><rect x="209" y="172.5" width="1" height="5" fill="#999"/><rect x="306" y="172.5" width="1" height="5" fill="#999"/><rect x="403" y="172.5" width="1" height="5" fill="#999"/><rect x="500" y="172.5" width="1" height="5" fill="#999"/><rect x="597" y="172.5" width="1" height="5" fill="#999"/><rect x="694" y="172.5" width="1" height="5" fill="#999"/><rect x="791" y="172.5" width="1" height="5" fill="#999"/><rect x="888" y="172.5" width="1" height="5" fill="#999"/><rect x="985" y="172.5" width="1" height="5" fill="#999"/><rect x="1082" y="172.5" width="1" height="5" fill="#999"/><rect x="1179" y="172.5" width="1" height="5" fill="#999"/><rect x="101.8" y="175.5" width="1" height="1.5" fill="#9a9a9a"/><rect x="121.2" y="175.5" width="1" height="1.5" fill="#9a9a9a"/><rect x="130.9" y="175.5" width="1" height="1.5" fill="#9a9a9a"/><rect x="140.6" y="175.5" width="1" height="1.5" fill="#9a9a9a"/><rect x="150.3" y="175.5" width="1" height="1.5" fill="#9a9a9a"/><rect x="160.0" y="174.5" width="1" height="2.5" fill="#9a9a9a"/><rect x="169.7" y="175.5" width="1" height="1.5" fill="#9a9a9a"/><rect x="179.4" y="175.5" width="1" height="1.5" fill="#9a9a9a"/><rect x="189.1" y="175.5" width="1" height="1.5" fill="#9a9a9a"/><rect x="198.8" y="175.5" width="1" height="1.5" fill="#9a9a9a"/><rect x="218.2" y="175.5" width="1" height="1.5" fill="#9a9a9a"/><rect x="227.9" y="175.5" width="1" height="1.5" fill="#9a9a9a"/><rect x="237.6" y="175.5" width="1" height="1.5" fill="#9a9a9a"/><rect x="247.3" y="175.5" width="1" height="1.5" fill="#9a9a9a"/><rect x="257.0" y="174.5" width="1" height="2.5" fill="#9a9a9a"/><rect x="266.7" y="175.5" width="1" height="1.5" fill="#9a9a9a"/><rect x="276.4" y="175.5" width="1" height="1.5" fill="#9a9a9a"/><rect x="286.1" y="175.5" width="1" height="1.5" fill="#9a9a9a"/><rect x="295.8" y="175.5" width="1" height="1.5" fill="#9a9a9a"/><rect x="315.2" y="175.5" width="1" height="1.5" fill="#9a9a9a"/><rect x="324.9" y="175.5" width="1" height="1.5" fill="#9a9a9a"/><rect x="334.6" y="175.5" width="1" height="1.5" fill="#9a9a9a"/><rect x="344.3" y="175.5" width="1" height="1.5" fill="#9a9a9a"/><rect x="354.0" y="174.5" width="1" height="2.5" fill="#9a9a9a"/><rect x="363.7" y="175.5" width="1" height="1.5" fill="#9a9a9a"/><rect x="373.4" y="175.5" width="1" height="1.5" fill="#9a9a9a"/><rect x="383.1" y="175.5" width="1" height="1.5" fill="#9a9a9a"/><rect x="392.8" y="175.5" width="1" height="1.5" fill="#9a9a9a"/><rect x="412.2" y="175.5" width="1" height="1.5" fill="#9a9a9a"/><rect x="421.9" y="175.5" width="1" height="1.5" fill="#9a9a9a"/><rect x="431.6" y="175.5" width="1" height="1.5" fill="#9a9a9a"/><rect x="441.3" y="175.5" width="1" height="1.5" fill="#9a9a9a"/><rect x="451.0" y="174.5" width="1" height="2.5" fill="#9a9a9a"/><rect x="460.7" y="175.5" width="1" height="1.5" fill="#9a9a9a"/><rect x="470.4" y="175.5" width="1" height="1.5" fill="#9a9a9a"/><rect x="480.1" y="175.5" width="1" height="1.5" fill="#9a9a9a"/><rect x="489.8" y="175.5" width="1" height="1.5" fill="#9a9a9a"/><rect x="509.2" y="175.5" width="1" height="1.5" fill="#9a9a9a"/><rect x="518.9" y="175.5" width="1" height="1.5" fill="#9a9a9a"/><rect x="528.6" y="175.5" width="1" height="1.5" fill="#9a9a9a"/><rect x="538.3" y="175.5" width="1" height="1.5" fill="#9a9a9a"/><rect x="548.0" y="174.5" width="1" height="2.5" fill="#9a9a9a"/><rect x="557.7" y="175.5" width="1" height="1.5" fill="#9a9a9a"/><rect x="567.4" y="175.5" width="1" height="1.5" fill="#9a9a9a"/><rect x="577.1" y="175.5" width="1" height="1.5" fill="#9a9a9a"/><rect x="586.8" y="175.5" width="1" height="1.5" fill="#9a9a9a"/><rect x="606.2" y="175.5" width="1" height="1.5" fill="#9a9a9a"/><rect x="615.9" y="175.5" width="1" height="1.5" fill="#9a9a9a"/><rect x="625.6" y="175.5" width="1" height="1.5" fill="#9a9a9a"/><rect x="635.3" y="175.5" width="1" height="1.5" fill="#9a9a9a"/><rect x="645.0" y="174.5" width="1" height="2.5" fill="#9a9a9a"/><rect x="654.7" y="175.5" width="1" height="1.5" fill="#9a9a9a"/><rect x="664.4" y="175.5" width="1" height="1.5" fill="#9a9a9a"/><rect x="674.1" y="175.5" width="1" height="1.5" fill="#9a9a9a"/><rect x="683.8" y="175.5" width="1" height="1.5" fill="#9a9a9a"/><rect x="703.2" y="175.5" width="1" height="1.5" fill="#9a9a9a"/><rect x="712.9" y="175.5" width="1" height="1.5" fill="#9a9a9a"/><rect x="722.6" y="175.5" width="1" height="1.5" fill="#9a9a9a"/><rect x="732.3" y="175.5" width="1" height="1.5" fill="#9a9a9a"/><rect x="742.0" y="174.5" width="1" height="2.5" fill="#9a9a9a"/><rect x="751.7" y="175.5" width="1" height="1.5" fill="#9a9a9a"/><rect x="761.4" y="175.5" width="1" height="1.5" fill="#9a9a9a"/><rect x="771.1" y="175.5" width="1" height="1.5" fill="#9a9a9a"/><rect x="780.8" y="175.5" width="1" height="1.5" fill="#9a9a9a"/><rect x="800.2" y="175.5" width="1" height="1.5" fill="#9a9a9a"/><rect x="809.9" y="175.5" width="1" height="1.5" fill="#9a9a9a"/><rect x="819.6" y="175.5" width="1" height="1.5" fill="#9a9a9a"/><rect x="829.3" y="175.5" width="1" height="1.5" fill="#9a9a9a"/><rect x="839.0" y="174.5" width="1" height="2.5" fill="#9a9a9a"/><rect x="848.7" y="175.5" width="1" height="1.5" fill="#9a9a9a"/><rect x="858.4" y="175.5" width="1" height="1.5" fill="#9a9a9a"/><rect x="868.1" y="175.5" width="1" height="1.5" fill="#9a9a9a"/><rect x="877.8" y="175.5" width="1" height="1.5" fill="#9a9a9a"/><rect x="897.2" y="175.5" width="1" height="1.5" fill="#9a9a9a"/><rect x="906.9" y="175.5" width="1" height="1.5" fill="#9a9a9a"/><rect x="916.6" y="175.5" width="1" height="1.5" fill="#9a9a9a"/><rect x="926.3" y="175.5" width="1" height="1.5" fill="#9a9a9a"/><rect x="936.0" y="174.5" width="1" height="2.5" fill="#9a9a9a"/><rect x="945.7" y="175.5" width="1" height="1.5" fill="#9a9a9a"/><rect x="955.4" y="175.5" width="1" height="1.5" fill="#9a9a9a"/><rect x="965.1" y="175.5" width="1" height="1.5" fill="#9a9a9a"/><rect x="974.8" y="175.5" width="1" height="1.5" fill="#9a9a9a"/><rect x="994.2" y="175.5" width="1" height="1.5" fill="#9a9a9a"/><rect x="1003.9" y="175.5" width="1" height="1.5" fill="#9a9a9a"/><rect x="1013.6" y="175.5" width="1" height="1.5" fill="#9a9a9a"/><rect x="1023.3" y="175.5" width="1" height="1.5" fill="#9a9a9a"/><rect x="1033.0" y="174.5" width="1" height="2.5" fill="#9a9a9a"/><rect x="1042.7" y="175.5" width="1" height="1.5" fill="#9a9a9a"/><rect x="1052.4" y="175.5" width="1" height="1.5" fill="#9a9a9a"/><rect x="1062.1" y="175.5" width="1" height="1.5" fill="#9a9a9a"/><rect x="1071.8" y="175.5" width="1" height="1.5" fill="#9a9a9a"/><rect x="1091.2" y="175.5" width="1" height="1.5" fill="#9a9a9a"/><rect x="1100.9" y="175.5" width="1" height="1.5" fill="#9a9a9a"/><rect x="1110.6" y="175.5" width="1" height="1.5" fill="#9a9a9a"/><rect x="1120.3" y="175.5" width="1" height="1.5" fill="#9a9a9a"/><rect x="1130.0" y="174.5" width="1" height="2.5" fill="#9a9a9a"/><rect x="1139.7" y="175.5" width="1" height="1.5" fill="#9a9a9a"/><rect x="1149.4" y="175.5" width="1" height="1.5" fill="#9a9a9a"/><rect x="1159.1" y="175.5" width="1" height="1.5" fill="#9a9a9a"/><rect x="1168.8" y="175.5" width="1" height="1.5" fill="#9a9a9a"/><rect x="1188.2" y="175.5" width="1" height="1.5" fill="#9a9a9a"/><rect x="1197.9" y="175.5" width="1" height="1.5" fill="#9a9a9a"/><rect x="1207.6" y="175.5" width="1" height="1.5" fill="#9a9a9a"/><rect x="1217.3" y="175.5" width="1" height="1.5" fill="#9a9a9a"/><rect x="1227.0" y="174.5" width="1" height="2.5" fill="#9a9a9a"/><rect x="1236.7" y="175.5" width="1" height="1.5" fill="#9a9a9a"/><rect x="1246.4" y="175.5" width="1" height="1.5" fill="#9a9a9a"/><rect x="54" y="901" width="6" height="1" fill="#8a8a8a"/><rect x="54" y="804" width="6" height="1" fill="#8a8a8a"/><rect x="54" y="707" width="6" height="1" fill="#8a8a8a"/><rect x="54" y="610" width="6" height="1" fill="#8a8a8a"/><rect x="54" y="513" width="6" height="1" fill="#8a8a8a"/><rect x="54" y="416" width="6" height="1" fill="#8a8a8a"/><rect x="54" y="319" width="6" height="1" fill="#8a8a8a"/><rect x="54" y="222" width="6" height="1" fill="#8a8a8a"/><rect x="57.5" y="978.1" width="1.5" height="1" fill="#9a9a9a"/><rect x="57.5" y="968.4" width="1.5" height="1" fill="#9a9a9a"/><rect x="57.5" y="958.7" width="1.5" height="1" fill="#9a9a9a"/><rect x="56.5" y="949.0" width="2.5" height="1" fill="#9a9a9a"/><rect x="57.5" y="939.3" width="1.5" height="1" fill="#9a9a9a"/><rect x="57.5" y="929.6" width="1.5" height="1" fill="#9a9a9a"/><rect x="57.5" y="919.9" width="1.5" height="1" fill="#9a9a9a"/><rect x="57.5" y="910.2" width="1.5" height="1" fill="#9a9a9a"/><rect x="57.5" y="890.8" width="1.5" height="1" fill="#9a9a9a"/><rect x="57.5" y="881.1" width="1.5" height="1" fill="#9a9a9a"/><rect x="57.5" y="871.4" width="1.5" height="1" fill="#9a9a9a"/><rect x="57.5" y="861.7" width="1.5" height="1" fill="#9a9a9a"/><rect x="56.5" y="852.0" width="2.5" height="1" fill="#9a9a9a"/><rect x="57.5" y="842.3" width="1.5" height="1" fill="#9a9a9a"/><rect x="57.5" y="832.6" width="1.5" height="1" fill="#9a9a9a"/><rect x="57.5" y="822.9" width="1.5" height="1" fill="#9a9a9a"/><rect x="57.5" y="813.2" width="1.5" height="1" fill="#9a9a9a"/><rect x="57.5" y="793.8" width="1.5" height="1" fill="#9a9a9a"/><rect x="57.5" y="784.1" width="1.5" height="1" fill="#9a9a9a"/><rect x="57.5" y="774.4" width="1.5" height="1" fill="#9a9a9a"/><rect x="57.5" y="764.7" width="1.5" height="1" fill="#9a9a9a"/><rect x="56.5" y="755.0" width="2.5" height="1" fill="#9a9a9a"/><rect x="57.5" y="745.3" width="1.5" height="1" fill="#9a9a9a"/><rect x="57.5" y="735.6" width="1.5" height="1" fill="#9a9a9a"/><rect x="57.5" y="725.9" width="1.5" height="1" fill="#9a9a9a"/><rect x="57.5" y="716.2" width="1.5" height="1" fill="#9a9a9a"/><rect x="57.5" y="696.8" width="1.5" height="1" fill="#9a9a9a"/><rect x="57.5" y="687.1" width="1.5" height="1" fill="#9a9a9a"/><rect x="57.5" y="677.4" width="1.5" height="1" fill="#9a9a9a"/><rect x="57.5" y="667.7" width="1.5" height="1" fill="#9a9a9a"/><rect x="56.5" y="658.0" width="2.5" height="1" fill="#9a9a9a"/><rect x="57.5" y="648.3" width="1.5" height="1" fill="#9a9a9a"/><rect x="57.5" y="638.6" width="1.5" height="1" fill="#9a9a9a"/><rect x="57.5" y="628.9" width="1.5" height="1" fill="#9a9a9a"/><rect x="57.5" y="619.2" width="1.5" height="1" fill="#9a9a9a"/><rect x="57.5" y="599.8" width="1.5" height="1" fill="#9a9a9a"/><rect x="57.5" y="590.1" width="1.5" height="1" fill="#9a9a9a"/><rect x="57.5" y="580.4" width="1.5" height="1" fill="#9a9a9a"/><rect x="57.5" y="570.7" width="1.5" height="1" fill="#9a9a9a"/><rect x="56.5" y="561.0" width="2.5" height="1" fill="#9a9a9a"/><rect x="57.5" y="551.3" width="1.5" height="1" fill="#9a9a9a"/><rect x="57.5" y="541.6" width="1.5" height="1" fill="#9a9a9a"/><rect x="57.5" y="531.9" width="1.5" height="1" fill="#9a9a9a"/><rect x="57.5" y="522.2" width="1.5" height="1" fill="#9a9a9a"/><rect x="57.5" y="502.8" width="1.5" height="1" fill="#9a9a9a"/><rect x="57.5" y="493.1" width="1.5" height="1" fill="#9a9a9a"/><rect x="57.5" y="483.4" width="1.5" height="1" fill="#9a9a9a"/><rect x="57.5" y="473.7" width="1.5" height="1" fill="#9a9a9a"/><rect x="56.5" y="464.0" width="2.5" height="1" fill="#9a9a9a"/><rect x="57.5" y="454.3" width="1.5" height="1" fill="#9a9a9a"/><rect x="57.5" y="444.6" width="1.5" height="1" fill="#9a9a9a"/><rect x="57.5" y="434.9" width="1.5" height="1" fill="#9a9a9a"/><rect x="57.5" y="425.2" width="1.5" height="1" fill="#9a9a9a"/><rect x="57.5" y="405.8" width="1.5" height="1" fill="#9a9a9a"/><rect x="57.5" y="396.1" width="1.5" height="1" fill="#9a9a9a"/><rect x="57.5" y="386.4" width="1.5" height="1" fill="#9a9a9a"/><rect x="57.5" y="376.7" width="1.5" height="1" fill="#9a9a9a"/><rect x="56.5" y="367.0" width="2.5" height="1" fill="#9a9a9a"/><rect x="57.5" y="357.3" width="1.5" height="1" fill="#9a9a9a"/><rect x="57.5" y="347.6" width="1.5" height="1" fill="#9a9a9a"/><rect x="57.5" y="337.9" width="1.5" height="1" fill="#9a9a9a"/><rect x="57.5" y="328.2" width="1.5" height="1" fill="#9a9a9a"/><rect x="57.5" y="308.8" width="1.5" height="1" fill="#9a9a9a"/><rect x="57.5" y="299.1" width="1.5" height="1" fill="#9a9a9a"/><rect x="57.5" y="289.4" width="1.5" height="1" fill="#9a9a9a"/><rect x="57.5" y="279.7" width="1.5" height="1" fill="#9a9a9a"/><rect x="56.5" y="270.0" width="2.5" height="1" fill="#9a9a9a"/><rect x="57.5" y="260.3" width="1.5" height="1" fill="#9a9a9a"/><rect x="57.5" y="250.6" width="1.5" height="1" fill="#9a9a9a"/><rect x="57.5" y="240.9" width="1.5" height="1" fill="#9a9a9a"/><rect x="57.5" y="231.2" width="1.5" height="1" fill="#9a9a9a"/><rect x="57.5" y="211.8" width="1.5" height="1" fill="#9a9a9a"/><rect x="57.5" y="202.1" width="1.5" height="1" fill="#9a9a9a"/></svg>
<div class="a" style="left:92.0px;top:161px;width:42.0px;text-align:center;font-size:11px;line-height:11px;color:#9a9a9a;letter-spacing:-0.3px;">1500</div>
<div class="a" style="left:189.0px;top:161px;width:42.0px;text-align:center;font-size:11px;line-height:11px;color:#9a9a9a;letter-spacing:-0.3px;">1000</div>
<div class="a" style="left:288.8px;top:161px;width:36.5px;text-align:center;font-size:11px;line-height:11px;color:#9a9a9a;letter-spacing:-0.3px;">500</div>
<div class="a" style="left:391.2px;top:161px;width:25.5px;text-align:center;font-size:11px;line-height:11px;color:#9a9a9a;letter-spacing:-0.3px;">0</div>
<div class="a" style="left:482.8px;top:161px;width:36.5px;text-align:center;font-size:11px;line-height:11px;color:#9a9a9a;letter-spacing:-0.3px;">500</div>
<div class="a" style="left:577.0px;top:161px;width:42.0px;text-align:center;font-size:11px;line-height:11px;color:#9a9a9a;letter-spacing:-0.3px;">1000</div>
<div class="a" style="left:674.0px;top:161px;width:42.0px;text-align:center;font-size:11px;line-height:11px;color:#9a9a9a;letter-spacing:-0.3px;">1500</div>
<div class="a" style="left:771.0px;top:161px;width:42.0px;text-align:center;font-size:11px;line-height:11px;color:#9a9a9a;letter-spacing:-0.3px;">2000</div>
<div class="a" style="left:868.0px;top:161px;width:42.0px;text-align:center;font-size:11px;line-height:11px;color:#9a9a9a;letter-spacing:-0.3px;">2500</div>
<div class="a" style="left:965.0px;top:161px;width:42.0px;text-align:center;font-size:11px;line-height:11px;color:#9a9a9a;letter-spacing:-0.3px;">3000</div>
<div class="a" style="left:1062.0px;top:161px;width:42.0px;text-align:center;font-size:11px;line-height:11px;color:#9a9a9a;letter-spacing:-0.3px;">3500</div>
<div class="a" style="left:1159.0px;top:161px;width:42.0px;text-align:center;font-size:11px;line-height:11px;color:#9a9a9a;letter-spacing:-0.3px;">4000</div>
<div class="a" style="left:1212px;top:161px;width:40px;text-align:right;font-size:11px;line-height:11px;color:#a5a5a5;">pixels</div>
<div class="a" style="left:19px;top:214.0px;width:60px;height:11px;text-align:center;font-size:11px;line-height:11px;color:#9a9a9a;letter-spacing:-0.3px;transform:rotate(-90deg);">3500</div>
<div class="a" style="left:19px;top:311.0px;width:60px;height:11px;text-align:center;font-size:11px;line-height:11px;color:#9a9a9a;letter-spacing:-0.3px;transform:rotate(-90deg);">3000</div>
<div class="a" style="left:19px;top:408.0px;width:60px;height:11px;text-align:center;font-size:11px;line-height:11px;color:#9a9a9a;letter-spacing:-0.3px;transform:rotate(-90deg);">2500</div>
<div class="a" style="left:19px;top:505.0px;width:60px;height:11px;text-align:center;font-size:11px;line-height:11px;color:#9a9a9a;letter-spacing:-0.3px;transform:rotate(-90deg);">2000</div>
<div class="a" style="left:19px;top:602.0px;width:60px;height:11px;text-align:center;font-size:11px;line-height:11px;color:#9a9a9a;letter-spacing:-0.3px;transform:rotate(-90deg);">1500</div>
<div class="a" style="left:19px;top:699.0px;width:60px;height:11px;text-align:center;font-size:11px;line-height:11px;color:#9a9a9a;letter-spacing:-0.3px;transform:rotate(-90deg);">1000</div>
<div class="a" style="left:19px;top:796.0px;width:60px;height:11px;text-align:center;font-size:11px;line-height:11px;color:#9a9a9a;letter-spacing:-0.3px;transform:rotate(-90deg);">500</div>
<div class="a" style="left:19px;top:893.0px;width:60px;height:11px;text-align:center;font-size:11px;line-height:11px;color:#9a9a9a;letter-spacing:-0.3px;transform:rotate(-90deg);">0</div>
<div class="a" style="left:19px;top:975px;width:60px;height:11px;text-align:center;font-size:11px;line-height:11px;color:#a5a5a5;transform:rotate(-90deg);">pixels</div>
<div class="a" style="left:61px;top:178px;width:1195px;height:1.5px;background:#a3a3a3;"></div>
<div class="a" style="left:60px;top:178px;width:1.5px;height:821px;background:#a3a3a3;"></div>
<div class="a" style="left:62px;top:180px;width:1176px;height:800px;background:#ffffff;"></div>
<div class="a" style="left:1238px;top:180px;width:18px;height:800px;background:#ffffff;"></div>
<div class="a" style="left:1238px;top:181px;width:18px;height:18px;background:#f0f0f0;"></div>
<svg class="a" style="left:1241px;top:185px;" width="12" height="9" viewBox="0 0 12 9"><path d="M2,7 L6,3 L10,7" stroke="#333" stroke-width="2" fill="none"/></svg>
<div class="a" style="left:1238px;top:368px;width:18px;height:422px;background:#cdcdcd;"></div>
<div class="a" style="left:1238px;top:958px;width:18px;height:18px;background:#f0f0f0;"></div>
<svg class="a" style="left:1241px;top:963px;" width="12" height="9" viewBox="0 0 12 9"><path d="M2,2 L6,6 L10,2" stroke="#333" stroke-width="2" fill="none"/></svg>
<div class="a" style="left:62px;top:980px;width:1194px;height:20px;background:#ffffff;"></div>
<div class="a" style="left:62px;top:980px;width:598px;height:20px;background:#f0f0f0;"></div>
<div class="a" style="left:61px;top:979px;width:599px;height:1px;background:#a8a8a8;"></div>
<svg class="a" style="left:63px;top:980px;" width="185" height="20" viewBox="0 0 185 20"><path d="M3,2 L9,2 L12,5 L12,16 L3,16 Z" fill="#fff" stroke="#111" stroke-width="1.2"/><path d="M7.5,7 L7.5,13 M4.5,10 L10.5,10" stroke="#111" stroke-width="1.3"/><path d="M24,4 L24,15" stroke="#888" stroke-width="1.2"/><path d="M32,4 L25,9.5 L32,15 Z" fill="#888"/><path d="M50,4 L43,9.5 L50,15 Z" fill="#777"/><path d="M133,4 L140,9.5 L133,15 Z" fill="#777"/><path d="M150,4 L157,9.5 L150,15 Z" fill="#777"/><path d="M159,4 L159,15" stroke="#777" stroke-width="1.2"/><path d="M170,2 L176,2 L179,5 L179,16 L170,16 Z" fill="#fff" stroke="#111" stroke-width="1.2"/><path d="M174.5,7 L174.5,13 M171.5,10 L177.5,10" stroke="#111" stroke-width="1.3"/></svg>
<div id="t25" class="a t" style="left:137px;top:984.00px;font-size:13px;line-height:13px;color:#222;transform:scaleX(1.0144);">1 of 1</div>
<div class="a" style="left:249px;top:980px;width:1px;height:20px;background:#cfcfcf;"></div>
<svg class="a" style="left:249px;top:980px;" width="80" height="20" viewBox="0 0 80 20"><path d="M1,0 L64,0 L74,10 L75,20 L1,20 Z" fill="#ffffff"/><path d="M64,0 L74,10 L75,20" stroke="#bbb" fill="none"/></svg>
<div id="t26" class="a t" style="left:265px;top:983.00px;font-size:13px;line-height:13px;color:#222;transform:scaleX(0.9708);">Page 1</div>
<div class="a" style="left:654px;top:980px;width:1px;height:20px;background:#cccccc;"></div>
<svg class="a" style="left:655px;top:982px;" width="6" height="16" viewBox="0 0 6 16"><circle cx="3" cy="3" r="0.9" fill="#999"/><circle cx="3" cy="8" r="0.9" fill="#999"/><circle cx="3" cy="13" r="0.9" fill="#999"/></svg>
<svg class="a" style="left:663px;top:983px;" width="12" height="14" viewBox="0 0 12 14"><path d="M8,2 L3,7 L8,12" stroke="#222" stroke-width="2" fill="none"/></svg>
<div class="a" style="left:690px;top:981px;width:515px;height:16px;background:#c9c9c9;"></div>
<div class="a" style="left:1212px;top:980px;width:22px;height:20px;background:#f0f0f0;"></div>
<svg class="a" style="left:1218px;top:983px;" width="12" height="14" viewBox="0 0 12 14"><path d="M4,2 L9,7 L4,12" stroke="#222" stroke-width="2" fill="none"/></svg>
<svg class="a" style="left:1237px;top:981px;" width="18" height="18" viewBox="0 0 18 18"><circle cx="7.5" cy="7.5" r="5.5" fill="#fff" stroke="#333" stroke-width="1.4"/><path d="M7.5,4.5 L7.5,10.5 M4.5,7.5 L10.5,7.5" stroke="#333" stroke-width="1.2"/><path d="M11.5,11.5 L16,16" stroke="#333" stroke-width="2.2"/></svg>
<div class="a" style="left:40px;top:1000px;width:1216px;height:21px;background:#f0f0f0;"></div>
<div class="a" style="left:40px;top:1000px;width:1216px;height:1px;background:#e0e0e0;"></div>
<svg class="a" style="left:44px;top:1003px;" width="80" height="18" viewBox="0 0 80 18"><circle cx="4" cy="3" r="0.9" fill="#aaa"/><circle cx="4" cy="8" r="0.9" fill="#aaa"/><circle cx="4" cy="13" r="0.9" fill="#aaa"/><path d="M9,3 L16,8 L9,13 Z" fill="#111"/><path d="M23,16 L30,9" stroke="#6f9590" stroke-width="2.6" stroke-linecap="round"/><path d="M28,8 L32,12" stroke="#223" stroke-width="2.2"/><ellipse cx="32.5" cy="6.5" rx="2.6" ry="2.2" transform="rotate(-45 32.5 6.5)" fill="#223"/><path d="M29,10 L32,7" stroke="#223" stroke-width="3"/><path d="M50,3 L45,8 L50,13" stroke="#cfcfcf" stroke-width="1.6" fill="none"/></svg>
<div class="a" style="left:102px;top:1001px;width:21px;height:20px;background:#ffffff;border:1px solid #555;box-sizing:border-box;"></div>
<svg class="a" style="left:102px;top:1001px;" width="21" height="20" viewBox="0 0 21 20"><path d="M1,1 L20,19 M20,1 L1,19" stroke="#333" stroke-width="1"/></svg>
<div id="t27" class="a t" style="left:471px;top:1004.42px;font-size:12.5px;line-height:12.5px;color:#b4b4b4;font-style:italic;transform:scaleX(1.0536);">Drag colors (or objects) here to store these colors with your document</div>
<svg class="a" style="left:1212px;top:1003px;" width="40" height="14" viewBox="0 0 40 14"><path d="M4,2 L9,7 L4,12" stroke="#cfcfcf" stroke-width="1.5" fill="none"/><path d="M24,3 L28,7 L24,11 M29,3 L33,7 L29,11" stroke="#c8c8c8" stroke-width="1.3" fill="none"/></svg>
<svg class="a" style="left:0px;top:0px;" width="1600" height="1066" viewBox="0 0 1600 1066"><defs>
<clipPath id="cc"><circle cx="457.5" cy="587.5" r="186.5"/></clipPath>
<clipPath id="sunc"><circle cx="458" cy="587.5" r="155.5"/></clipPath>
<linearGradient id="gy" x1="0" y1="0" x2="0" y2="1"><stop offset="0" stop-color="#f7d37c"/><stop offset="1" stop-color="#f6cf72"/></linearGradient>
<radialGradient id="gsun" cx="462" cy="450" r="170" gradientUnits="userSpaceOnUse"><stop offset="0" stop-color="#f3b573"/><stop offset="0.55" stop-color="#eea06a"/><stop offset="1" stop-color="#e7805a"/></radialGradient>
<linearGradient id="gbot" x1="0" y1="670" x2="0" y2="774" gradientUnits="userSpaceOnUse"><stop offset="0" stop-color="#f9cf76"/><stop offset="1" stop-color="#ef9148"/></linearGradient>
<linearGradient id="gor" x1="779" y1="0" x2="1046" y2="0" gradientUnits="userSpaceOnUse"><stop offset="0" stop-color="#d8532e"/><stop offset="0.5" stop-color="#e88a4c"/><stop offset="1" stop-color="#f2c766"/></linearGradient>
<linearGradient id="garc" x1="826" y1="0" x2="1003" y2="0" gradientUnits="userSpaceOnUse"><stop offset="0" stop-color="#d9502f"/><stop offset="0.55" stop-color="#e8904e"/><stop offset="1" stop-color="#f2c862"/></linearGradient>
<linearGradient id="gw1" x1="765" y1="0" x2="1060" y2="0" gradientUnits="userSpaceOnUse"><stop offset="0" stop-color="#8bbd7c"/><stop offset="0.5" stop-color="#79ad77"/><stop offset="1" stop-color="#5e9470"/></linearGradient>
<linearGradient id="gw2" x1="765" y1="0" x2="1060" y2="0" gradientUnits="userSpaceOnUse"><stop offset="0" stop-color="#5e9470"/><stop offset="0.5" stop-color="#76aa76"/><stop offset="1" stop-color="#8bbd7c"/></linearGradient>
<pattern id="tex" width="4" height="6" patternUnits="userSpaceOnUse"><rect width="4" height="6" fill="#f4f4f4"/><rect x="1" width="1" height="6" fill="#ececec"/><rect x="3" width="1" height="6" fill="#fafafa"/></pattern>
</defs><defs><clipPath id="ccpalm"><path d="M250,380 L250,541 C253.3,542.3 260.7,545.3 270.0,549.0 C279.3,552.7 296.8,559.0 306.0,563.0 C315.2,567.0 318.5,570.5 325.0,573.0 C331.5,575.5 337.0,578.5 345.0,578.0 C353.0,577.5 363.8,573.2 373.0,570.0 C382.2,566.8 390.5,562.3 400.0,558.5 C409.5,554.7 420.2,550.2 430.0,547.0 C439.8,543.8 448.2,539.2 459.0,539.5 C469.8,539.8 483.5,544.6 495.0,549.0 C506.5,553.4 516.5,560.8 528.0,566.0 C539.5,571.2 551.8,579.0 564.0,580.0 C576.2,581.0 590.8,575.8 601.0,572.0 C611.2,568.2 608.5,572.2 625.0,557.0 C641.5,541.8 687.5,493.7 700.0,481.0 L700,380 Z"/></clipPath></defs><rect x="164" y="237" width="998" height="698" fill="url(#tex)"/><rect x="190" y="408" width="38" height="40" fill="#8b2216"/><rect x="190" y="465" width="38" height="39" fill="#e07a42"/><rect x="190" y="522" width="38" height="39" fill="#f3c068"/><rect x="190" y="581" width="38" height="40" fill="#6fb18c"/><rect x="190" y="644" width="38" height="40" fill="#3f6b52"/><g clip-path="url(#cc)"><rect x="260" y="390" width="400" height="400" fill="url(#gy)"/><path d="M250,380 L250,540 C253.3,541.3 260.7,544.3 270.0,548.0 C279.3,551.7 296.8,558.0 306.0,562.0 C315.2,566.0 318.5,569.5 325.0,572.0 C331.5,574.5 337.0,577.5 345.0,577.0 C353.0,576.5 363.8,572.2 373.0,569.0 C382.2,565.8 390.5,561.3 400.0,557.5 C409.5,553.7 420.2,549.2 430.0,546.0 C439.8,542.8 448.2,538.2 459.0,538.5 C469.8,538.8 483.5,543.6 495.0,548.0 C506.5,552.4 516.5,559.8 528.0,565.0 C539.5,570.2 551.8,578.0 564.0,579.0 C576.2,580.0 590.8,574.8 601.0,571.0 C611.2,567.2 608.5,571.2 625.0,556.0 C641.5,540.8 687.5,492.7 700.0,480.0 L700,380 Z" fill="url(#gsun)" clip-path="url(#sunc)"/><path d="M258,566 C260.2,567.5 264.0,570.2 271.0,575.0 C278.0,579.8 289.0,589.7 300.0,595.0 C311.0,600.3 324.8,605.3 337.0,607.0 C349.2,608.7 360.8,607.7 373.0,605.0 C385.2,602.3 396.0,596.5 410.0,591.0 C424.0,585.5 442.8,574.2 457.0,572.0 C471.2,569.8 483.2,574.5 495.0,578.0 C506.8,581.5 516.5,587.7 528.0,593.0 C539.5,598.3 551.8,607.9 564.0,610.0 C576.2,612.1 588.8,610.5 601.0,605.5 C613.2,600.5 627.2,587.6 637.0,580.0 C646.8,572.4 656.2,563.3 660.0,560.0 L660,660 C653.2,665.2 628.8,684.0 619.0,691.0 C609.2,698.0 610.2,699.8 601.0,702.0 C591.8,704.2 576.2,706.5 564.0,704.0 C551.8,701.5 539.2,692.2 528.0,687.0 C516.8,681.8 508.3,676.2 497.0,673.0 C485.7,669.8 474.5,664.7 460.0,667.5 C445.5,670.3 424.5,683.9 410.0,690.0 C395.5,696.1 385.2,701.5 373.0,704.0 C360.8,706.5 347.8,706.2 337.0,705.0 C326.2,703.8 321.2,702.0 308.0,696.5 C294.8,691.0 266.3,676.1 258.0,672.0 Z" fill="#84c398"/><path d="M258,606 C260.2,607.5 264.0,611.2 271.0,615.0 C278.0,618.8 289.0,624.7 300.0,629.0 C311.0,633.3 324.8,639.8 337.0,641.0 C349.2,642.2 360.8,639.7 373.0,636.5 C385.2,633.3 396.0,627.2 410.0,622.0 C424.0,616.8 442.8,606.7 457.0,605.0 C471.2,603.3 483.2,608.3 495.0,612.0 C506.8,615.7 516.5,621.7 528.0,627.0 C539.5,632.3 551.8,641.5 564.0,644.0 C576.2,646.5 588.8,645.1 601.0,642.0 C613.2,638.9 627.2,630.8 637.0,625.5 C646.8,620.2 656.2,612.6 660.0,610.0 L660,640 C655.5,642.8 642.8,651.3 633.0,656.5 C623.2,661.7 612.5,668.2 601.0,671.0 C589.5,673.8 576.2,675.4 564.0,673.0 C551.8,670.6 539.2,661.7 528.0,656.5 C516.8,651.3 508.5,645.2 497.0,642.0 C485.5,638.8 473.5,634.0 459.0,637.0 C444.5,640.0 424.3,653.7 410.0,660.0 C395.7,666.3 385.2,672.2 373.0,675.0 C360.8,677.8 349.2,678.3 337.0,677.0 C324.8,675.7 309.2,669.8 300.0,667.0 C290.8,664.2 289.0,663.2 282.0,660.0 C275.0,656.8 262.0,650.0 258.0,648.0 Z" fill="#52896c"/><path d="M258,800 L258,672 C266.3,676.1 294.8,691.0 308.0,696.5 C321.2,702.0 326.2,703.8 337.0,705.0 C347.8,706.2 360.8,706.5 373.0,704.0 C385.2,701.5 395.5,696.1 410.0,690.0 C424.5,683.9 445.5,670.3 460.0,667.5 C474.5,664.7 485.7,669.8 497.0,673.0 C508.3,676.2 516.8,681.8 528.0,687.0 C539.2,692.2 551.8,701.5 564.0,704.0 C576.2,706.5 591.8,704.2 601.0,702.0 C610.2,699.8 609.2,698.0 619.0,691.0 C628.8,684.0 653.2,665.2 660.0,660.0 L660,800 Z" fill="url(#gbot)"/></g><g clip-path="url(#ccpalm)"><g fill="#cf5036"><rect x="441" y="494" width="44.5" height="35"/><rect x="440" y="491.5" width="47.5" height="3" fill="#a83326"/><rect x="451" y="500.5" width="24" height="11.5" fill="#9c2e24"/><rect x="472.5" y="470" width="1.6" height="22" fill="#a83326"/><rect x="473" y="470" width="14.5" height="7" fill="#a83326"/></g><g stroke="#b8442f" stroke-width="0.8" fill="none"><path d="M428,514.5 L442,514.5 M428.5,514 L428.5,543 M428,530 L442,530 M428,533.5 L442,533.5 M428,537 L442,537 M428,540.5 L442,540.5 M441.5,514 L441.5,543 M447,530 L481,530 M447,537 L481,537 M447,530 L447,545 M481,530 L481,542"/></g><g transform="translate(315,495) scale(0.08446)" fill="#dc5539"><path d="M320,290 C336.7,270.8 385.8,202.0 420.0,175.0 C454.2,148.0 507.5,135.8 525.0,128.0 L525,128 C510.8,144.2 467.5,191.3 440.0,225.0 C412.5,258.7 373.3,312.5 360.0,330.0Z"/><path d="M300,300 C294.2,285.0 272.5,237.5 265.0,210.0 C257.5,182.5 256.7,147.5 255.0,135.0 L255,135 C262.5,145.8 285.0,174.2 300.0,200.0 C315.0,225.8 337.5,275.0 345.0,290.0Z"/><path d="M320,295 C303.3,295.8 252.5,290.8 220.0,300.0 C187.5,309.2 140.8,341.7 125.0,350.0 L125,350 C140.8,352.5 187.5,365.8 220.0,365.0 C252.5,364.2 303.3,348.3 320.0,345.0Z"/><path d="M300,320 C278.3,336.7 205.3,369.7 170.0,420.0 C134.7,470.3 101.7,588.3 88.0,622.0 L88,622 C107.5,599.2 164.7,528.7 205.0,485.0 C245.3,441.3 309.2,380.8 330.0,360.0Z"/><path d="M320,340 C315.0,370.0 288.3,459.2 290.0,520.0 C291.7,580.8 323.3,674.2 330.0,705.0 L330,705 C335.8,674.2 357.5,580.8 365.0,520.0 C372.5,459.2 373.3,370.0 375.0,340.0Z"/><path d="M340,290 C361.7,286.7 426.7,263.3 470.0,270.0 C513.3,276.7 578.3,320.0 600.0,330.0 L600,330 C578.3,328.3 513.3,320.0 470.0,320.0 C426.7,320.0 361.7,328.3 340.0,330.0Z"/><path d="M630,370 C618.3,361.7 586.7,326.7 560.0,320.0 C533.3,313.3 485.0,328.3 470.0,330.0 L470,330 C485.0,336.7 531.7,356.7 560.0,370.0 C588.3,383.3 626.7,403.3 640.0,410.0Z"/><path d="M640,360 C663.3,353.3 735.8,321.7 780.0,320.0 C824.2,318.3 884.2,345.0 905.0,350.0 L905,350 C884.2,353.3 822.5,360.0 780.0,370.0 C737.5,380.0 671.7,403.3 650.0,410.0Z"/><path d="M660,380 C691.7,386.7 794.7,389.2 850.0,420.0 C905.3,450.8 968.3,540.8 992.0,565.0 L992,565 C965.0,549.2 887.0,492.5 830.0,470.0 C773.0,447.5 680.0,436.7 650.0,430.0Z"/><path d="M640,400 C653.3,420.0 699.2,469.2 720.0,520.0 C740.8,570.8 757.5,674.2 765.0,705.0 L765,705 C750.8,680.8 705.8,609.2 680.0,560.0 C654.2,510.8 621.7,435.0 610.0,410.0Z"/><path d="M630,380 C618.3,391.7 578.3,420.0 560.0,450.0 C541.7,480.0 526.7,541.7 520.0,560.0 L520,560 C530.0,546.7 558.3,503.3 580.0,480.0 C601.7,456.7 638.3,430.0 650.0,420.0Z"/><path d="M640,370 C646.7,358.3 660.0,320.0 680.0,300.0 C700.0,280.0 746.7,258.3 760.0,250.0 L760,250 C753.3,261.7 736.7,295.0 720.0,320.0 C703.3,345.0 670.0,386.7 660.0,400.0Z"/><path d="M300,320 a40,40 0 1 0 80,0 a40,40 0 1 0 -80,0Z"/><path d="M600,390 a40,40 0 1 0 80,0 a40,40 0 1 0 -80,0Z"/><path d="M376.4,424.2 C385.0,470.9 410.7,614.3 427.9,704.2 C445.1,794.2 470.8,920.7 479.4,964.0 L520.6,956.0 C512.5,912.7 488.3,785.8 472.1,695.8 C455.9,605.7 431.7,462.4 423.6,415.8Z"/><path d="M616.4,435.5 C608.3,478.8 584.1,609.0 567.9,695.8 C551.7,782.5 527.5,912.7 519.4,956.0 L560.6,964.0 C569.2,920.7 594.9,790.8 612.1,704.2 C629.3,617.7 655.0,487.8 663.6,444.5Z"/><path d="M1155.0,485.0 Q1133.0,403.3 1050.0,420.0 Q1082.4,484.9 1155.0,485.0Z"/><path d="M1155.0,485.0 Q1185.0,410.0 1110.0,380.0 Q1096.8,447.8 1155.0,485.0Z"/><path d="M1155.0,485.0 Q1238.2,483.2 1240.0,400.0 Q1170.4,415.4 1155.0,485.0Z"/><path d="M1155.0,485.0 Q1238.3,537.7 1310.0,470.0 Q1229.1,442.1 1155.0,485.0Z"/><path d="M1155.0,485.0 Q1184.6,586.2 1290.0,590.0 Q1243.6,510.4 1155.0,485.0Z"/><path d="M1155.0,485.0 Q1107.7,572.1 1180.0,640.0 Q1202.5,556.9 1155.0,485.0Z"/><path d="M1155.0,485.0 Q1071.8,477.2 1060.0,560.0 Q1131.2,552.6 1155.0,485.0Z"/></g><g fill="#dc5539"><path d="M527.0,538.0 Q523.5,532.2 517.0,534.0 Q519.7,541.8 527.0,538.0Z"/><path d="M527.0,538.0 Q535.2,541.3 538.0,533.0 Q530.8,531.9 527.0,538.0Z"/><path d="M527.0,538.0 Q529.2,548.7 540.0,547.0 Q535.1,540.2 527.0,538.0Z"/><path d="M527.0,538.0 Q519.5,540.8 516.0,548.0 Q526.5,548.5 527.0,538.0Z"/><path d="M527.0,538.0 Q532.2,533.0 527.0,528.0 Q521.8,533.0 527.0,538.0Z"/><path d="M527.0,538.0 Q524.0,547.3 533.0,551.0 Q533.4,542.9 527.0,538.0Z"/></g><g transform="translate(495,435) scale(0.14073)" fill="#e0553a"><path d="M860,250 C850.0,236.7 826.7,195.8 800.0,170.0 C773.3,144.2 735.8,111.3 700.0,95.0 C664.2,78.7 604.2,75.8 585.0,72.0 L585,72 C595.8,83.3 620.8,114.5 650.0,140.0 C679.2,165.5 726.7,198.3 760.0,225.0 C793.3,251.7 835.0,287.5 850.0,300.0Z"/><path d="M850,285 C854.7,265.8 876.0,201.7 878.0,170.0 C880.0,138.3 870.0,115.0 862.0,95.0 C854.0,75.0 835.3,57.5 830.0,50.0 L830,50 C839.2,55.0 870.3,60.0 885.0,80.0 C899.7,100.0 913.8,134.2 918.0,170.0 C922.2,205.8 911.3,274.2 910.0,295.0Z"/><path d="M860,240 C841.7,232.0 793.3,199.0 750.0,192.0 C706.7,185.0 648.0,189.2 600.0,198.0 C552.0,206.8 485.0,237.2 462.0,245.0 L462,245 C485.0,247.2 550.3,251.8 600.0,258.0 C649.7,264.2 716.7,274.2 760.0,282.0 C803.3,289.8 843.3,301.2 860.0,305.0Z"/><path d="M860,300 C843.3,305.8 795.0,315.0 760.0,335.0 C725.0,355.0 687.0,385.5 650.0,420.0 C613.0,454.5 556.7,521.7 538.0,542.0 L538,542 C555.0,530.3 604.7,494.8 640.0,472.0 C675.3,449.2 715.0,422.0 750.0,405.0 C785.0,388.0 833.3,375.8 850.0,370.0Z"/><path d="M870,255 C889.2,253.8 952.5,240.5 985.0,248.0 C1017.5,255.5 1043.8,274.3 1065.0,300.0 C1086.2,325.7 1104.2,385.0 1112.0,402.0 L1112,402 C1103.3,392.5 1081.2,361.2 1060.0,345.0 C1038.8,328.8 1015.0,308.3 985.0,305.0 C955.0,301.7 897.5,321.7 880.0,325.0Z"/><path d="M930,285 C950.0,305.0 1020.8,362.5 1050.0,405.0 C1079.2,447.5 1092.0,490.0 1105.0,540.0 C1118.0,590.0 1124.2,677.5 1128.0,705.0 L1128,705 C1118.0,681.7 1089.3,608.3 1068.0,565.0 C1046.7,521.7 1028.8,481.7 1000.0,445.0 C971.2,408.3 912.5,361.7 895.0,345.0Z"/><path d="M830,320 C828.3,350.0 826.7,445.0 820.0,500.0 C813.3,555.0 794.2,605.0 790.0,650.0 C785.8,695.0 794.2,750.0 795.0,770.0 L795,770 C815.0,748.3 889.2,690.0 915.0,640.0 C940.8,590.0 948.3,523.3 950.0,470.0 C951.7,416.7 929.2,345.0 925.0,320.0Z"/><path d="M330,300 C341.7,287.0 374.7,240.3 400.0,222.0 C425.3,203.7 468.3,195.3 482.0,190.0 L482,190 C474.2,200.0 448.7,230.0 435.0,250.0 C421.3,270.0 405.8,300.0 400.0,310.0Z"/><path d="M420,275 C436.7,276.7 488.0,276.7 520.0,285.0 C552.0,293.3 596.7,318.3 612.0,325.0 L612,325 C596.7,326.7 550.3,333.3 520.0,335.0 C489.7,336.7 445.0,335.0 430.0,335.0Z"/><path d="M400,295 C383.3,293.3 333.3,284.2 300.0,285.0 C266.7,285.8 232.0,289.2 200.0,300.0 C168.0,310.8 123.3,341.7 108.0,350.0 L108,350 C123.3,353.7 168.0,370.3 200.0,372.0 C232.0,373.7 266.7,366.2 300.0,360.0 C333.3,353.8 383.3,339.2 400.0,335.0Z"/><path d="M380,315 C358.3,325.8 293.3,352.5 250.0,380.0 C206.7,407.5 155.3,441.3 120.0,480.0 C84.7,518.7 51.7,590.0 38.0,612.0 L38,612 C56.7,601.7 109.7,577.0 150.0,550.0 C190.3,523.0 239.2,480.8 280.0,450.0 C320.8,419.2 375.8,379.2 395.0,365.0Z"/><path d="M370,340 C358.3,358.3 320.0,398.3 300.0,450.0 C280.0,501.7 256.3,584.2 250.0,650.0 C243.7,715.8 260.0,812.5 262.0,845.0 L262,845 C271.7,812.5 303.7,710.8 320.0,650.0 C336.3,589.2 345.0,530.0 360.0,480.0 C375.0,430.0 401.7,371.7 410.0,350.0Z"/><path d="M430,330 C441.7,338.3 480.8,355.0 500.0,380.0 C519.2,405.0 537.5,463.3 545.0,480.0 L545,480 C534.2,468.3 502.5,428.3 480.0,410.0 C457.5,391.7 421.7,376.7 410.0,370.0Z"/><path d="M368.7,336.6 C375.5,368.3 391.9,447.9 409.4,526.8 C426.9,605.8 458.0,728.0 473.6,810.2 C489.3,892.4 498.3,985.1 503.3,1020.1 L562.7,1011.9 C558.0,976.9 549.7,884.9 534.4,801.8 C519.0,718.7 487.8,592.9 470.6,513.2 C453.4,433.4 437.9,355.0 431.3,323.4Z"/><path d="M360,310 a40,40 0 1 0 80,0 a40,40 0 1 0 -80,0Z"/><path d="M830,300 a42,42 0 1 0 84,0 a42,42 0 1 0 -84,0Z"/><path d="M808.7,309.6 C795.7,349.2 756.3,477.2 730.5,547.6 C704.7,617.9 678.3,657.8 654.1,731.9 C629.8,806.0 596.5,948.8 585.0,992.2 L643.0,1007.8 C654.8,964.5 689.5,820.6 713.9,748.1 C738.4,675.5 763.3,642.1 789.5,572.4 C815.7,502.8 857.7,370.8 871.3,330.4Z"/></g></g><defs>
<linearGradient id="garc2" x1="272" y1="0" x2="928" y2="0" gradientUnits="userSpaceOnUse"><stop offset="0" stop-color="#d44a2e"/><stop offset="0.5" stop-color="#e88a4e"/><stop offset="1" stop-color="#f0c65f"/></linearGradient>
<linearGradient id="gw1z" x1="100" y1="0" x2="1100" y2="0" gradientUnits="userSpaceOnUse"><stop offset="0" stop-color="#8cbd7d"/><stop offset="0.45" stop-color="#78ab77"/><stop offset="1" stop-color="#5c9370"/></linearGradient>
<linearGradient id="gw2z" x1="100" y1="0" x2="1100" y2="0" gradientUnits="userSpaceOnUse"><stop offset="0" stop-color="#5c9370"/><stop offset="0.55" stop-color="#78ab77"/><stop offset="1" stop-color="#8cbd7d"/></linearGradient>
</defs><g transform="translate(740,230) scale(0.29078)" stroke-linecap="round" fill="none"><line x1="325" y1="68" x2="420" y2="225" stroke="#d64a2d" stroke-width="28"/><line x1="593" y1="82" x2="593" y2="195" stroke="#d64a2d" stroke-width="28"/><line x1="872" y1="78" x2="778" y2="240" stroke="#f0c862" stroke-width="28"/><line x1="195" y1="292" x2="280" y2="372" stroke="#d64a2d" stroke-width="28"/><line x1="990" y1="298" x2="915" y2="358" stroke="#f0c862" stroke-width="28"/><line x1="55" y1="542" x2="232" y2="542" stroke="#d64a2d" stroke-width="28"/><line x1="962" y1="542" x2="1170" y2="542" stroke="#f0c862" stroke-width="28"/><path d="M292,600 L292,560 A308,308 0 0 1 908,560 L908,600" stroke="url(#garc2)" stroke-width="37" stroke-linecap="butt"/><path d="M592,327 Q640,326 680,338" stroke="#d8432b" stroke-width="28"/><path d="M718,357 Q775,410 800,490" stroke="#d8432b" stroke-width="28"/><path d="M105.0,629.5 L113.2,637.6 L121.3,646.3 L129.5,655.2 L137.7,664.0 L145.8,672.4 L154.0,680.2 L162.2,686.9 L170.3,692.5 L178.5,696.6 L186.7,699.1 L194.8,700.0 L203.0,699.2 L211.2,696.7 L219.3,692.7 L227.5,687.2 L235.7,680.5 L243.8,672.8 L252.0,664.4 L260.2,655.6 L268.3,646.6 L276.5,638.0 L284.7,629.8 L292.8,622.5 L301.0,616.3 L309.2,611.4 L317.3,608.0 L325.5,606.3 L333.7,606.2 L341.8,607.8 L350.0,611.0 L358.2,615.7 L366.3,621.8 L374.5,629.0 L382.7,637.1 L390.8,645.7 L399.0,654.6 L407.2,663.5 L415.3,671.9 L423.5,679.7 L431.7,686.6 L439.8,692.2 L448.0,696.4 L456.2,699.0 L464.3,700.0 L472.5,699.3 L480.7,696.9 L488.8,693.0 L497.0,687.6 L505.2,680.9 L513.3,673.3 L521.5,664.9 L529.7,656.1 L537.8,647.2 L546.0,638.5 L554.2,630.3 L562.3,622.9 L570.5,616.6 L578.7,611.7 L586.8,608.2 L595.0,606.3 L603.2,606.1 L611.3,607.6 L619.5,610.8 L627.7,615.4 L635.8,621.4 L644.0,628.6 L652.2,636.6 L660.3,645.2 L668.5,654.1 L676.7,663.0 L684.8,671.4 L693.0,679.3 L701.2,686.2 L709.3,691.9 L717.5,696.2 L725.7,698.9 L733.8,700.0 L742.0,699.4 L750.2,697.1 L758.3,693.2 L766.5,687.9 L774.7,681.4 L782.8,673.8 L791.0,665.4 L799.2,656.6 L807.3,647.7 L815.5,639.0 L823.7,630.8 L831.8,623.4 L840.0,617.0 L848.2,611.9 L856.3,608.4 L864.5,606.4 L872.7,606.1 L880.8,607.5 L889.0,610.5 L897.2,615.1 L905.3,621.0 L913.5,628.1 L921.7,636.1 L929.8,644.7 L938.0,653.5 L946.2,662.4 L954.3,670.9 L962.5,678.8 L970.7,685.8 L978.8,691.6 L987.0,695.9 L995.2,698.8 L1003.3,700.0 L1011.5,699.5 L1019.7,697.3 L1027.8,693.5 L1036.0,688.3 L1044.2,681.8 L1052.3,674.3 L1060.5,666.0 L1068.7,657.2 L1076.8,648.3 L1085.0,639.5 " stroke="url(#gw1z)" stroke-width="36"/><path d="M105.0,789.5 L113.2,797.6 L121.3,806.3 L129.5,815.2 L137.7,824.0 L145.8,832.4 L154.0,840.2 L162.2,846.9 L170.3,852.5 L178.5,856.6 L186.7,859.1 L194.8,860.0 L203.0,859.2 L211.2,856.7 L219.3,852.7 L227.5,847.2 L235.7,840.5 L243.8,832.8 L252.0,824.4 L260.2,815.6 L268.3,806.6 L276.5,798.0 L284.7,789.8 L292.8,782.5 L301.0,776.3 L309.2,771.4 L317.3,768.0 L325.5,766.3 L333.7,766.2 L341.8,767.8 L350.0,771.0 L358.2,775.7 L366.3,781.8 L374.5,789.0 L382.7,797.1 L390.8,805.7 L399.0,814.6 L407.2,823.5 L415.3,831.9 L423.5,839.7 L431.7,846.6 L439.8,852.2 L448.0,856.4 L456.2,859.0 L464.3,860.0 L472.5,859.3 L480.7,856.9 L488.8,853.0 L497.0,847.6 L505.2,840.9 L513.3,833.3 L521.5,824.9 L529.7,816.1 L537.8,807.2 L546.0,798.5 L554.2,790.3 L562.3,782.9 L570.5,776.6 L578.7,771.7 L586.8,768.2 L595.0,766.3 L603.2,766.1 L611.3,767.6 L619.5,770.8 L627.7,775.4 L635.8,781.4 L644.0,788.6 L652.2,796.6 L660.3,805.2 L668.5,814.1 L676.7,823.0 L684.8,831.4 L693.0,839.3 L701.2,846.2 L709.3,851.9 L717.5,856.2 L725.7,858.9 L733.8,860.0 L742.0,859.4 L750.2,857.1 L758.3,853.2 L766.5,847.9 L774.7,841.4 L782.8,833.8 L791.0,825.4 L799.2,816.6 L807.3,807.7 L815.5,799.0 L823.7,790.8 L831.8,783.4 L840.0,777.0 L848.2,771.9 L856.3,768.4 L864.5,766.4 L872.7,766.1 L880.8,767.5 L889.0,770.5 L897.2,775.1 L905.3,781.0 L913.5,788.1 L921.7,796.1 L929.8,804.7 L938.0,813.5 L946.2,822.4 L954.3,830.9 L962.5,838.8 L970.7,845.8 L978.8,851.6 L987.0,855.9 L995.2,858.8 L1003.3,860.0 L1011.5,859.5 L1019.7,857.3 L1027.8,853.5 L1036.0,848.3 L1044.2,841.8 L1052.3,834.3 L1060.5,826.0 L1068.7,817.2 L1076.8,808.3 L1085.0,799.5 " stroke="url(#gw2z)" stroke-width="36"/><path d="M105.0,949.5 L113.2,957.6 L121.3,966.3 L129.5,975.2 L137.7,984.0 L145.8,992.4 L154.0,1000.2 L162.2,1006.9 L170.3,1012.5 L178.5,1016.6 L186.7,1019.1 L194.8,1020.0 L203.0,1019.2 L211.2,1016.7 L219.3,1012.7 L227.5,1007.2 L235.7,1000.5 L243.8,992.8 L252.0,984.4 L260.2,975.6 L268.3,966.6 L276.5,958.0 L284.7,949.8 L292.8,942.5 L301.0,936.3 L309.2,931.4 L317.3,928.0 L325.5,926.3 L333.7,926.2 L341.8,927.8 L350.0,931.0 L358.2,935.7 L366.3,941.8 L374.5,949.0 L382.7,957.1 L390.8,965.7 L399.0,974.6 L407.2,983.5 L415.3,991.9 L423.5,999.7 L431.7,1006.6 L439.8,1012.2 L448.0,1016.4 L456.2,1019.0 L464.3,1020.0 L472.5,1019.3 L480.7,1016.9 L488.8,1013.0 L497.0,1007.6 L505.2,1000.9 L513.3,993.3 L521.5,984.9 L529.7,976.1 L537.8,967.2 L546.0,958.5 L554.2,950.3 L562.3,942.9 L570.5,936.6 L578.7,931.7 L586.8,928.2 L595.0,926.3 L603.2,926.1 L611.3,927.6 L619.5,930.8 L627.7,935.4 L635.8,941.4 L644.0,948.6 L652.2,956.6 L660.3,965.2 L668.5,974.1 L676.7,983.0 L684.8,991.4 L693.0,999.3 L701.2,1006.2 L709.3,1011.9 L717.5,1016.2 L725.7,1018.9 L733.8,1020.0 L742.0,1019.4 L750.2,1017.1 L758.3,1013.2 L766.5,1007.9 L774.7,1001.4 L782.8,993.8 L791.0,985.4 L799.2,976.6 L807.3,967.7 L815.5,959.0 L823.7,950.8 L831.8,943.4 L840.0,937.0 L848.2,931.9 L856.3,928.4 L864.5,926.4 L872.7,926.1 L880.8,927.5 L889.0,930.5 L897.2,935.1 L905.3,941.0 L913.5,948.1 L921.7,956.1 L929.8,964.7 L938.0,973.5 L946.2,982.4 L954.3,990.9 L962.5,998.8 L970.7,1005.8 L978.8,1011.6 L987.0,1015.9 L995.2,1018.8 L1003.3,1020.0 L1011.5,1019.5 L1019.7,1017.3 L1027.8,1013.5 L1036.0,1008.3 L1044.2,1001.8 L1052.3,994.3 L1060.5,986.0 L1068.7,977.2 L1076.8,968.3 L1085.0,959.5 " stroke="url(#gw1z)" stroke-width="36"/></g><defs><clipPath id="oout"><circle cx="912" cy="759.5" r="133.5"/></clipPath><clipPath id="oin"><circle cx="912" cy="759.5" r="110"/></clipPath><mask id="om" maskUnits="userSpaceOnUse" x="760" y="600" width="310" height="300"><path d="M770.0,749.7 L772.9,750.5 L775.7,751.5 L778.5,752.7 L781.4,753.9 L784.2,755.3 L787.1,756.8 L790.0,758.4 L792.8,760.0 L795.6,761.6 L798.5,763.3 L801.4,764.9 L804.2,766.5 L807.0,768.0 L809.9,769.5 L812.8,770.9 L815.6,772.1 L818.5,773.2 L821.3,774.2 L824.1,775.0 L827.0,775.7 L829.9,776.1 L832.7,776.4 L835.5,776.5 L838.4,776.4 L841.2,776.1 L844.1,775.6 L847.0,775.0 L849.8,774.2 L852.6,773.2 L855.5,772.1 L858.4,770.8 L861.2,769.4 L864.0,768.0 L866.9,766.4 L869.8,764.8 L872.6,763.2 L875.5,761.6 L878.3,759.9 L881.1,758.3 L884.0,756.8 L886.9,755.3 L889.7,753.9 L892.5,752.6 L895.4,751.5 L898.2,750.5 L901.1,749.6 L904.0,748.9 L906.8,748.4 L909.6,748.1 L912.5,748.0 L915.4,748.1 L918.2,748.3 L921.0,748.8 L923.9,749.4 L926.8,750.2 L929.6,751.1 L932.5,752.2 L935.3,753.4 L938.1,754.8 L941.0,756.2 L943.9,757.8 L946.7,759.4 L949.5,761.0 L952.4,762.6 L955.2,764.3 L958.1,765.9 L961.0,767.4 L963.8,768.9 L966.6,770.3 L969.5,771.6 L972.4,772.8 L975.2,773.8 L978.0,774.7 L980.9,775.4 L983.8,776.0 L986.6,776.3 L989.5,776.5 L992.3,776.5 L995.1,776.2 L998.0,775.8 L1000.9,775.3 L1003.7,774.5 L1006.5,773.6 L1009.4,772.5 L1012.2,771.3 L1015.1,770.0 L1018.0,768.6 L1020.8,767.0 L1023.6,765.5 L1026.5,763.8 L1029.3,762.2 L1032.2,760.5 L1035.0,758.9 L1037.9,757.4 L1040.8,755.8 L1043.6,754.4 L1046.5,753.1 L1049.3,751.9 L1052.2,750.8 L1055.0,749.9 L1055,600 L770,600 Z" fill="#fff"/><path d="M770.0,726.7 L772.9,727.6 L775.7,728.6 L778.5,729.8 L781.4,731.2 L784.2,732.6 L787.1,734.1 L790.0,735.7 L792.8,737.4 L795.6,739.1 L798.5,740.8 L801.4,742.5 L804.2,744.1 L807.0,745.7 L809.9,747.2 L812.8,748.7 L815.6,750.0 L818.5,751.1 L821.3,752.1 L824.1,753.0 L827.0,753.6 L829.9,754.1 L832.7,754.4 L835.5,754.5 L838.4,754.4 L841.2,754.1 L844.1,753.6 L847.0,752.9 L849.8,752.1 L852.6,751.1 L855.5,749.9 L858.4,748.6 L861.2,747.2 L864.0,745.7 L866.9,744.1 L869.8,742.4 L872.6,740.7 L875.5,739.0 L878.3,737.3 L881.1,735.7 L884.0,734.1 L886.9,732.5 L889.7,731.1 L892.5,729.8 L895.4,728.6 L898.2,727.6 L901.1,726.7 L904.0,726.0 L906.8,725.5 L909.6,725.1 L912.5,725.0 L915.4,725.1 L918.2,725.3 L921.0,725.8 L923.9,726.4 L926.8,727.2 L929.6,728.2 L932.5,729.4 L935.3,730.6 L938.1,732.0 L941.0,733.5 L943.9,735.1 L946.7,736.8 L949.5,738.4 L952.4,740.1 L955.2,741.8 L958.1,743.5 L961.0,745.1 L963.8,746.7 L966.6,748.1 L969.5,749.5 L972.4,750.7 L975.2,751.8 L978.0,752.7 L980.9,753.4 L983.8,754.0 L986.6,754.3 L989.5,754.5 L992.3,754.5 L995.1,754.2 L998.0,753.8 L1000.9,753.2 L1003.7,752.4 L1006.5,751.5 L1009.4,750.4 L1012.2,749.1 L1015.1,747.8 L1018.0,746.3 L1020.8,744.7 L1023.6,743.1 L1026.5,741.4 L1029.3,739.7 L1032.2,738.0 L1035.0,736.3 L1037.9,734.7 L1040.8,733.1 L1043.6,731.6 L1046.5,730.3 L1049.3,729.0 L1052.2,727.9 L1055.0,727.0 L1055,600 L770,600 Z" fill="#000" clip-path="url(#oin)"/><path d="M770.0,773.6 L772.9,774.5 L775.7,775.5 L778.5,776.6 L781.4,777.8 L784.2,779.2 L787.1,780.7 L790.0,782.2 L792.8,783.8 L795.6,785.4 L798.5,787.0 L801.4,788.6 L804.2,790.2 L807.0,791.7 L809.9,793.1 L812.8,794.5 L815.6,795.7 L818.5,796.8 L821.3,797.7 L824.1,798.5 L827.0,799.2 L829.9,799.6 L832.7,799.9 L835.5,800.0 L838.4,799.9 L841.2,799.6 L844.1,799.2 L847.0,798.5 L849.8,797.7 L852.6,796.8 L855.5,795.6 L858.4,794.4 L861.2,793.1 L864.0,791.6 L866.9,790.1 L869.8,788.5 L872.6,786.9 L875.5,785.3 L878.3,783.7 L881.1,782.1 L884.0,780.6 L886.9,779.2 L889.7,777.8 L892.5,776.5 L895.4,775.4 L898.2,774.4 L901.1,773.6 L904.0,772.9 L906.8,772.4 L909.6,772.1 L912.5,772.0 L915.4,772.1 L918.2,772.3 L921.0,772.7 L923.9,773.3 L926.8,774.1 L929.6,775.1 L932.5,776.1 L935.3,777.3 L938.1,778.7 L941.0,780.1 L943.9,781.6 L946.7,783.2 L949.5,784.8 L952.4,786.4 L955.2,788.0 L958.1,789.6 L961.0,791.1 L963.8,792.6 L966.6,794.0 L969.5,795.2 L972.4,796.4 L975.2,797.4 L978.0,798.3 L980.9,799.0 L983.8,799.5 L986.6,799.8 L989.5,800.0 L992.3,800.0 L995.1,799.8 L998.0,799.4 L1000.9,798.8 L1003.7,798.0 L1006.5,797.1 L1009.4,796.1 L1012.2,794.9 L1015.1,793.6 L1018.0,792.2 L1020.8,790.7 L1023.6,789.2 L1026.5,787.6 L1029.3,785.9 L1032.2,784.3 L1035.0,782.7 L1037.9,781.2 L1040.8,779.7 L1043.6,778.3 L1046.5,777.0 L1049.3,775.8 L1052.2,774.8 L1055.0,773.9 L1055.0,798.0 L1052.2,798.9 L1049.3,800.0 L1046.5,801.2 L1043.6,802.5 L1040.8,804.0 L1037.9,805.5 L1035.0,807.1 L1032.2,808.8 L1029.3,810.4 L1026.5,812.1 L1023.6,813.8 L1020.8,815.4 L1018.0,816.9 L1015.1,818.4 L1012.2,819.7 L1009.4,820.9 L1006.5,822.0 L1003.7,823.0 L1000.9,823.7 L998.0,824.3 L995.1,824.7 L992.3,825.0 L989.5,825.0 L986.6,824.8 L983.8,824.5 L980.9,823.9 L978.0,823.2 L975.2,822.3 L972.4,821.2 L969.5,820.1 L966.6,818.7 L963.8,817.3 L961.0,815.8 L958.1,814.2 L955.2,812.6 L952.4,810.9 L949.5,809.2 L946.7,807.6 L943.9,805.9 L941.0,804.4 L938.1,802.9 L935.3,801.5 L932.5,800.3 L929.6,799.2 L926.8,798.2 L923.9,797.4 L921.0,796.8 L918.2,796.3 L915.4,796.1 L912.5,796.0 L909.6,796.1 L906.8,796.5 L904.0,797.0 L901.1,797.7 L898.2,798.5 L895.4,799.5 L892.5,800.7 L889.7,802.0 L886.9,803.4 L884.0,804.9 L881.1,806.5 L878.3,808.1 L875.5,809.8 L872.6,811.5 L869.8,813.1 L866.9,814.8 L864.0,816.3 L861.2,817.8 L858.4,819.2 L855.5,820.5 L852.6,821.6 L849.8,822.6 L847.0,823.5 L844.1,824.1 L841.2,824.6 L838.4,824.9 L835.5,825.0 L832.7,824.9 L829.9,824.6 L827.0,824.1 L824.1,823.5 L821.3,822.7 L818.5,821.7 L815.6,820.5 L812.8,819.3 L809.9,817.9 L807.0,816.4 L804.2,814.8 L801.4,813.2 L798.5,811.5 L795.6,809.9 L792.8,808.2 L790.0,806.6 L787.1,805.0 L784.2,803.5 L781.4,802.0 L778.5,800.7 L775.7,799.6 L772.9,798.5 L770.0,797.7 Z" fill="#fff"/><path d="M770.0,820.0 L772.9,820.8 L775.7,821.8 L778.5,822.8 L781.4,824.0 L784.2,825.3 L787.1,826.7 L790.0,828.1 L792.8,829.6 L795.6,831.2 L798.5,832.7 L801.4,834.2 L804.2,835.7 L807.0,837.1 L809.9,838.5 L812.8,839.8 L815.6,840.9 L818.5,842.0 L821.3,842.9 L824.1,843.6 L827.0,844.2 L829.9,844.7 L832.7,844.9 L835.5,845.0 L838.4,844.9 L841.2,844.6 L844.1,844.2 L847.0,843.6 L849.8,842.8 L852.6,841.9 L855.5,840.9 L858.4,839.7 L861.2,838.4 L864.0,837.1 L866.9,835.6 L869.8,834.2 L872.6,832.6 L875.5,831.1 L878.3,829.6 L881.1,828.1 L884.0,826.6 L886.9,825.3 L889.7,824.0 L892.5,822.8 L895.4,821.7 L898.2,820.8 L901.1,820.0 L904.0,819.4 L906.8,818.9 L909.6,818.6 L912.5,818.5 L915.4,818.6 L918.2,818.8 L921.0,819.2 L923.9,819.8 L926.8,820.5 L929.6,821.4 L932.5,822.4 L935.3,823.6 L938.1,824.8 L941.0,826.2 L943.9,827.6 L946.7,829.1 L949.5,830.6 L952.4,832.1 L955.2,833.6 L958.1,835.1 L961.0,836.6 L963.8,838.0 L966.6,839.3 L969.5,840.5 L972.4,841.6 L975.2,842.5 L978.0,843.3 L980.9,844.0 L983.8,844.5 L986.6,844.8 L989.5,845.0 L992.3,845.0 L995.1,844.8 L998.0,844.4 L1000.9,843.9 L1003.7,843.1 L1006.5,842.3 L1009.4,841.3 L1012.2,840.2 L1015.1,838.9 L1018.0,837.6 L1020.8,836.2 L1023.6,834.7 L1026.5,833.2 L1029.3,831.7 L1032.2,830.2 L1035.0,828.7 L1037.9,827.2 L1040.8,825.8 L1043.6,824.5 L1046.5,823.2 L1049.3,822.1 L1052.2,821.1 L1055.0,820.3 L1055,900 L770,900 Z" fill="#fff"/><path d="M866.0,859.6 L866.9,859.1 L867.8,858.6 L868.7,858.1 L869.6,857.6 L870.5,857.1 L871.3,856.6 L872.2,856.1 L873.1,855.6 L874.0,855.1 L874.9,854.6 L875.8,854.1 L876.7,853.6 L877.6,853.1 L878.5,852.6 L879.4,852.1 L880.2,851.6 L881.1,851.1 L882.0,850.7 L882.9,850.2 L883.8,849.7 L884.7,849.3 L885.6,848.8 L886.5,848.3 L887.4,847.9 L888.2,847.5 L889.1,847.1 L890.0,846.6 L890.9,846.2 L891.8,845.9 L892.7,845.5 L893.6,845.1 L894.5,844.8 L895.4,844.4 L896.3,844.1 L897.1,843.8 L898.0,843.5 L898.9,843.2 L899.8,843.0 L900.7,842.7 L901.6,842.5 L902.5,842.3 L903.4,842.1 L904.3,841.9 L905.2,841.7 L906.0,841.6 L906.9,841.4 L907.8,841.3 L908.7,841.2 L909.6,841.1 L910.5,841.1 L911.4,841.0 L912.3,841.0 L913.2,841.0 L914.1,841.0 L915.0,841.0 L915.8,841.1 L916.7,841.2 L917.6,841.2 L918.5,841.3 L919.4,841.5 L920.3,841.6 L921.2,841.8 L922.1,841.9 L923.0,842.1 L923.9,842.3 L924.7,842.6 L925.6,842.8 L926.5,843.1 L927.4,843.3 L928.3,843.6 L929.2,843.9 L930.1,844.2 L931.0,844.6 L931.9,844.9 L932.8,845.3 L933.6,845.6 L934.5,846.0 L935.4,846.4 L936.3,846.8 L937.2,847.2 L938.1,847.6 L939.0,848.1 L939.9,848.5 L940.8,849.0 L941.6,849.4 L942.5,849.9 L943.4,850.4 L944.3,850.8 L945.2,851.3 L946.1,851.8 L947.0,852.3 L947.9,852.8 L948.8,853.3 L949.7,853.8 L950.5,854.3 L951.4,854.8 L952.3,855.3 L953.2,855.8 L954.1,856.3 L955.0,856.8 Q911,884 866,859.6 Z" fill="#000"/></mask></defs><g clip-path="url(#oout)"><rect x="770" y="615" width="290" height="290" fill="url(#gor)" mask="url(#om)"/></g><rect x="176" y="887.8000000000001" width="65" height="1.6" fill="#5d8a6c"/><rect x="188" y="894.0" width="53" height="1.6" fill="#5d8a6c"/><rect x="201" y="900.2" width="40" height="1.6" fill="#5d8a6c"/><rect x="602" y="887.8000000000001" width="62" height="1.6" fill="#5d8a6c"/><rect x="602" y="894.0" width="54" height="1.6" fill="#5d8a6c"/><rect x="602" y="900.2" width="41" height="1.6" fill="#5d8a6c"/><circle cx="254.2" cy="895" r="9.7" fill="#d9692f"/><circle cx="380" cy="895" r="9.7" fill="#d9692f"/><circle cx="508.7" cy="895" r="9.7" fill="#d9692f"/><text x="254.2" y="900" font-size="13" font-weight="bold" fill="#fff" text-anchor="middle" font-family="Liberation Sans">f</text><rect x="375" y="890" width="10" height="10" rx="2.5" fill="none" stroke="#fff" stroke-width="1.4"/><circle cx="380" cy="895" r="2.3" fill="none" stroke="#fff" stroke-width="1.3"/><text x="508.7" y="898.5" font-size="9" font-weight="bold" fill="#fff" text-anchor="middle" font-family="Liberation Sans">Bē</text></svg>
<div id="t28" class="a t" style="left:268px;top:889.69px;font-size:11px;line-height:11px;color:#d97c48;transform:scaleX(0.9397);">/rodrigodesiigner</div>
<div id="t29" class="a t" style="left:394px;top:889.69px;font-size:11px;line-height:11px;color:#d97c48;transform:scaleX(0.9397);">/rodriigodesigner</div>
<div id="t30" class="a t" style="left:523px;top:889.69px;font-size:11px;line-height:11px;color:#d97c48;transform:scaleX(0.9275);">/rodriigodesigner</div>
<div class="a" style="left:1256px;top:135px;width:6px;height:886px;background:#f7f7f7;"></div>
<div class="a" style="left:1259px;top:135px;width:1.5px;height:886px;background:#e0e0e0;"></div>
<div class="a" style="left:1262px;top:135px;width:311px;height:886px;background:#f0f0f0;"></div>
<div class="a" style="left:1262px;top:135px;width:311px;height:22px;background:#e9e9e9;"></div>
<div id="t31" class="a t" style="left:1265px;top:139.00px;font-size:13px;line-height:13px;color:#222;transform:scaleX(1.0802);">Hints</div>
<svg class="a" style="left:1536px;top:140px;" width="30" height="12" viewBox="0 0 30 12"><path d="M2,2 L6,6 L2,10 Z M7,2 L11,6 L7,10 Z" fill="#c4c4c4"/><path d="M20,2 L28,10 M28,2 L20,10" stroke="#c4c4c4" stroke-width="1.4"/></svg>
<div class="a" style="left:1262px;top:157px;width:288px;height:1.5px;background:#b5b5b5;"></div>
<div class="a" style="left:1323px;top:164px;width:51px;height:23px;background:#e4e4e4;border:1px solid #b5b5b5;border-bottom:none;box-sizing:border-box;"></div>
<div class="a" style="left:1264px;top:187px;width:282px;height:830px;background:#ffffff;border:1px solid #b2b2b2;box-sizing:border-box;"></div>
<div class="a" style="left:1264px;top:161px;width:59px;height:27px;background:#ffffff;border:1px solid #b2b2b2;border-bottom:none;box-sizing:border-box;"></div>
<div id="t32" class="a t" style="left:1273px;top:166.57px;font-size:13.5px;line-height:13.5px;color:#222;transform:scaleX(1.0453);">Topics</div>
<div id="t33" class="a t" style="left:1328px;top:168.57px;font-size:13.5px;line-height:13.5px;color:#222;transform:scaleX(0.9745);">Videos</div>
<div id="t34" class="a t" style="left:1280px;top:209.49px;font-size:17.5px;line-height:17.5px;color:#74aa48;transform:scaleX(0.9524);">HINTS</div>
<svg class="a" style="left:1491px;top:208px;" width="20" height="18" viewBox="0 0 20 18"><rect x="3" y="0" width="15" height="15" fill="#c4c4c4"/><rect x="0" y="2" width="15" height="15" fill="#8f8f8f" stroke="#fff" stroke-width="0.8"/><text x="7.5" y="14" font-size="12" font-weight="bold" fill="#fff" text-anchor="middle" font-family="Liberation Sans">?</text></svg>
<div class="a" style="left:1280px;top:228.5px;width:232px;height:1.5px;background:#7a7a7a;"></div>
<div id="t35" class="a t" style="left:1280px;top:249.88px;font-size:15.5px;line-height:15.5px;color:#111;font-weight:bold;transform:scaleX(1.0299);">Moving, scaling, and</div>
<div id="t36" class="a t" style="left:1280px;top:271.38px;font-size:15.5px;line-height:15.5px;color:#111;font-weight:bold;transform:scaleX(1.0112);">stretching objects</div>
<div class="a" style="left:1280.7px;top:308.4px;width:3px;height:3px;background:#333;border-radius:1.5px;"></div>
<div id="t37" class="a t" style="left:1287px;top:303.79px;font-size:12.3px;line-height:12.3px;color:#2a2a2a;transform:scaleX(1.0037);">To move an object, drag it. To</div>
<div id="t38" class="a t" style="left:1287px;top:323.49px;font-size:12.3px;line-height:12.3px;color:#2a2a2a;transform:scaleX(1.0881);">constrain the movement to the</div>
<div id="t39" class="a t" style="left:1287px;top:343.19px;font-size:12.3px;line-height:12.3px;color:#2a2a2a;transform:scaleX(1.0998);">horizontal or vertical axis, hold down</div>
<div id="t40" class="a t" style="left:1287px;top:362.89px;font-size:12.3px;line-height:12.3px;color:#2a2a2a;transform:scaleX(1.0901);"><b style="color:#111">Ctrl</b> while dragging.</div>
<div class="a" style="left:1315.5px;top:399.5px;width:7px;height:7px;background:#000;"></div>
<div class="a" style="left:1392.5px;top:399.5px;width:7px;height:7px;background:#000;"></div>
<div class="a" style="left:1468.5px;top:399.5px;width:7px;height:7px;background:#000;"></div>
<div class="a" style="left:1315.5px;top:473.5px;width:7px;height:7px;background:#000;"></div>
<div class="a" style="left:1468.5px;top:473.5px;width:7px;height:7px;background:#000;"></div>
<div class="a" style="left:1315.5px;top:547.5px;width:7px;height:7px;background:#000;"></div>
<div class="a" style="left:1392.5px;top:547.5px;width:7px;height:7px;background:#000;"></div>
<div class="a" style="left:1468.5px;top:547.5px;width:7px;height:7px;background:#000;"></div>
<svg class="a" style="left:1392px;top:473px;" width="8" height="8" viewBox="0 0 8 8"><path d="M1,1 L7,7 M7,1 L1,7" stroke="#000" stroke-width="1.8"/></svg>
<svg class="a" style="left:1337px;top:406px;" width="20" height="20" viewBox="0 0 20 20"><path d="M10,1 L13,4.5 L11,4.5 L11,9 L15.5,9 L15.5,7 L19,10 L15.5,13 L15.5,11 L11,11 L11,15.5 L13,15.5 L10,19 L7,15.5 L9,15.5 L9,11 L4.5,11 L4.5,13 L1,10 L4.5,7 L4.5,9 L9,9 L9,4.5 L7,4.5 Z" fill="#000"/></svg>
<div class="a" style="left:1280.7px;top:575.9000000000001px;width:3px;height:3px;background:#333;border-radius:1.5px;"></div>
<div id="t41" class="a t" style="left:1287px;top:571.29px;font-size:12.3px;line-height:12.3px;color:#2a2a2a;transform:scaleX(1.0751);">To nudge the object, press the <b style="color:#111">Arrow</b></div>
<div id="t42" class="a t" style="left:1287px;top:590.99px;font-size:12.3px;line-height:12.3px;color:#2a2a2a;transform:scaleX(0.9755);">keys.</div>
<div class="a" style="left:1280.7px;top:621.8000000000001px;width:3px;height:3px;background:#333;border-radius:1.5px;"></div>
<div id="t43" class="a t" style="left:1287px;top:617.19px;font-size:12.3px;line-height:12.3px;color:#2a2a2a;transform:scaleX(1.0814);">To scale the object, drag one of the</div>
<div id="t44" class="a t" style="left:1287px;top:636.89px;font-size:12.3px;line-height:12.3px;color:#2a2a2a;transform:scaleX(1.1099);">corner sizing handles, holding down</div>
<div id="t45" class="a t" style="left:1287px;top:656.59px;font-size:12.3px;line-height:12.3px;color:#2a2a2a;transform:scaleX(1.0770);"><b style="color:#111">Shift</b> if you want to scale from the</div>
<div id="t46" class="a t" style="left:1287px;top:676.19px;font-size:12.3px;line-height:12.3px;color:#2a2a2a;transform:scaleX(1.0834);">center.</div>
<div class="a" style="left:1322.5px;top:708.5px;width:7px;height:7px;background:#000;"></div>
<div class="a" style="left:1421.5px;top:708.5px;width:7px;height:7px;background:#000;"></div>
<div class="a" style="left:1322.5px;top:794.5px;width:7px;height:7px;background:#000;"></div>
<svg class="a" style="left:1421px;top:794px;" width="8" height="8" viewBox="0 0 8 8"><path d="M1,1 L7,7 M7,1 L1,7" stroke="#000" stroke-width="1.8"/></svg>
<svg class="a" style="left:1312px;top:705px;" width="20" height="20" viewBox="0 0 20 20"><path d="M2,2 L8,2 L6,4 L15,13 L17,11 L17,17 L11,17 L13,15 L4,6 L2,8 Z" fill="#000"/></svg>
<div class="a" style="left:1280.7px;top:836.2px;width:3px;height:3px;background:#333;border-radius:1.5px;"></div>
<div id="t47" class="a t" style="left:1287px;top:831.59px;font-size:12.3px;line-height:12.3px;color:#2a2a2a;transform:scaleX(1.0971);">To stretch the object, drag one of the</div>
<div id="t48" class="a t" style="left:1287px;top:851.29px;font-size:12.3px;line-height:12.3px;color:#2a2a2a;transform:scaleX(1.1221);">stretching handles, holding down</div>
<div id="t49" class="a t" style="left:1287px;top:870.99px;font-size:12.3px;line-height:12.3px;color:#2a2a2a;transform:scaleX(1.0883);"><b style="color:#111">Shift</b> if you want to stretch from the</div>
<div id="t50" class="a t" style="left:1287px;top:890.59px;font-size:12.3px;line-height:12.3px;color:#2a2a2a;transform:scaleX(1.0834);">center.</div>
<div class="a" style="left:1287.7px;top:917.8000000000001px;width:3px;height:3px;background:#333;border-radius:1.5px;"></div>
<div id="t51" class="a t" style="left:1293px;top:913.19px;font-size:12.3px;line-height:12.3px;color:#2a2a2a;transform:scaleX(1.1079);">The top and bottom stretching</div>
<div id="t52" class="a t" style="left:1293px;top:932.89px;font-size:12.3px;line-height:12.3px;color:#2a2a2a;transform:scaleX(1.0882);">handles stretch the object vertically.</div>
<div class="a" style="left:1315.5px;top:969.5px;width:7px;height:7px;background:#000;"></div>
<div class="a" style="left:1468.5px;top:969.5px;width:7px;height:7px;background:#000;"></div>
<div class="a" style="left:1394px;top:969px;width:7px;height:7px;background:#000;"></div>
<svg class="a" style="left:1398px;top:962px;" width="12" height="22" viewBox="0 0 12 22"><path d="M6,1 L10,5 L7.2,5 L7.2,17 L10,17 L6,21 L2,17 L4.8,17 L4.8,5 L2,5 Z" fill="#000"/></svg>
<div class="a" style="left:1523px;top:200px;width:18px;height:785px;background:#f4f4f4;"></div>
<svg class="a" style="left:1524px;top:205px;" width="16" height="12" viewBox="0 0 16 12"><path d="M2,9 L8,3 L14,9" stroke="#333" stroke-width="2" fill="none"/></svg>
<div class="a" style="left:1524px;top:228px;width:17px;height:427px;background:#cdcdcd;"></div>
<svg class="a" style="left:1524px;top:951px;" width="16" height="12" viewBox="0 0 16 12"><path d="M2,3 L8,9 L14,3" stroke="#333" stroke-width="2" fill="none"/></svg>
<div class="a" style="left:1265px;top:985px;width:280px;height:31px;background:#f2f2f2;"></div>
<svg class="a" style="left:1272px;top:987px;" width="20" height="20" viewBox="0 0 20 20"><path d="M3,9 L10,2 L17,9 M5,8 L5,17 L15,17 L15,8" stroke="#222" stroke-width="1.5" fill="none"/><path d="M5,13 L15,13" stroke="#222" stroke-width="1.2"/></svg>
<svg class="a" style="left:1489px;top:990px;" width="20" height="16" viewBox="0 0 20 16"><path d="M1,8 L8,2 L8,5 L18,5 L18,11 L8,11 L8,14 Z" fill="#dfe6f0" stroke="#8b9bb3" stroke-width="1.2"/></svg>
<svg class="a" style="left:1518px;top:990px;" width="20" height="16" viewBox="0 0 20 16"><path d="M19,8 L12,2 L12,5 L2,5 L2,11 L12,11 L12,14 Z" fill="#e8e8e8" stroke="#d0d0d0" stroke-width="1.2"/></svg>
<div class="a" style="left:1549px;top:157px;width:24px;height:864px;background:#ececec;"></div>
<div class="a" style="left:1549.5px;top:157px;width:1.5px;height:864px;background:#5ab4e5;"></div>
<div class="a" style="left:1551px;top:157px;width:22px;height:82px;background:#d6e9f8;"></div>
<div class="a" style="left:1551px;top:240px;width:22px;height:153px;background:#e1e1e1;"></div>
<div class="a" style="left:1551px;top:395px;width:22px;height:143px;background:#e1e1e1;"></div>
<div class="a" style="left:1551px;top:540px;width:22px;height:147px;background:#e1e1e1;"></div>
<div class="a" style="left:1462px;top:191.5px;width:200px;height:15px;text-align:center;font-size:13px;line-height:15px;color:#222;transform:rotate(90deg);">Hints</div>
<div class="a" style="left:1462px;top:311.0px;width:200px;height:15px;text-align:center;font-size:13px;line-height:15px;color:#222;transform:rotate(90deg);">Object Properties</div>
<div class="a" style="left:1462px;top:461.5px;width:200px;height:15px;text-align:center;font-size:13px;line-height:15px;color:#222;transform:rotate(90deg);">Object Manager</div>
<div class="a" style="left:1462px;top:609.0px;width:200px;height:15px;text-align:center;font-size:13px;line-height:15px;color:#222;transform:rotate(90deg);">Step and Repeat</div>
<svg class="a" style="left:1553px;top:160px;" width="18" height="18" viewBox="0 0 18 18"><path d="M3,2 L3,13 L6,10 L8,15 L10,14 L8,9 L12,9 Z" fill="#f4f4f8" stroke="#333" stroke-width="1"/><path d="M12,3 L16,3 L16,6 L14,7 L14,9" stroke="#333" stroke-width="1.2" fill="none"/></svg>
<svg class="a" style="left:1553px;top:246px;" width="18" height="18" viewBox="0 0 18 18"><rect x="7" y="4" width="9" height="9" fill="#c7cbe0" stroke="#556" stroke-width="1"/><path d="M2,9 L7,5 L7,13 Z" fill="#e9e9e9" stroke="#777" stroke-width="0.8"/></svg>
<svg class="a" style="left:1553px;top:397px;" width="18" height="18" viewBox="0 0 18 18"><g fill="#667"><rect x="3" y="2" width="3" height="2"/><rect x="8" y="2" width="6" height="2"/><rect x="3" y="7" width="3" height="2"/><rect x="8" y="7" width="6" height="2"/><rect x="3" y="12" width="3" height="2"/><rect x="8" y="12" width="6" height="2"/></g></svg>
<svg class="a" style="left:1553px;top:543px;" width="18" height="18" viewBox="0 0 18 18"><rect x="2" y="6" width="7" height="8" fill="#fff" stroke="#222" stroke-width="1.1"/><rect x="9" y="2" width="7" height="7" fill="#fff" stroke="#222" stroke-width="1.1"/></svg>
<svg class="a" style="left:1552px;top:707px;" width="20" height="20" viewBox="0 0 20 20"><circle cx="10" cy="10" r="8" fill="none" stroke="#c6c6c6" stroke-width="1.3"/><path d="M10,5 L10,15 M5,10 L15,10" stroke="#c6c6c6" stroke-width="1.5"/></svg>
<div class="a" style="left:1573px;top:135px;width:21px;height:886px;background:#f0f0f0;"></div>
<svg class="a" style="left:1575px;top:136px;" width="18" height="56" viewBox="0 0 18 56"><circle cx="4" cy="4" r="0.9" fill="#999"/><circle cx="9" cy="4" r="0.9" fill="#999"/><circle cx="14" cy="4" r="0.9" fill="#999"/><path d="M6,9 L13,15 L6,21 Z" fill="#111"/><path d="M4,37 L11,30" stroke="#cfcfcf" stroke-width="2.4" stroke-linecap="round"/><path d="M9,29 L13,33" stroke="#c4c4c4" stroke-width="2"/><ellipse cx="13.5" cy="27.5" rx="2.6" ry="2.2" transform="rotate(-45 13.5 27.5)" fill="#c4c4c4"/><path d="M10,31 L13,28" stroke="#c4c4c4" stroke-width="3"/><path d="M4,51 L9,46 L14,51" stroke="#d0d0d0" stroke-width="1.6" fill="none"/></svg>
<div class="a" style="left:1574.5px;top:197px;width:19px;height:20px;background:#ffffff;border:1px solid #555;box-sizing:border-box;"></div>
<svg class="a" style="left:1574.5px;top:197px;" width="19" height="20" viewBox="0 0 19 20"><path d="M1,1 L18,19 M18,1 L1,19" stroke="#333" stroke-width="1"/></svg>
<svg class="a" style="left:1574.5px;top:216.6px;" width="19" height="760" viewBox="0 0 19 760"><rect x="0" y="0.00" width="19" height="19.6" fill="#231f20"/><rect x="0" y="0.00" width="19" height="0.6" fill="#000" opacity="0.12"/><rect x="0" y="19.45" width="19" height="19.6" fill="#414042"/><rect x="0" y="19.45" width="19" height="0.6" fill="#000" opacity="0.12"/><rect x="0" y="38.90" width="19" height="19.6" fill="#58595b"/><rect x="0" y="38.90" width="19" height="0.6" fill="#000" opacity="0.12"/><rect x="0" y="58.35" width="19" height="19.6" fill="#6d6e71"/><rect x="0" y="58.35" width="19" height="0.6" fill="#000" opacity="0.12"/><rect x="0" y="77.80" width="19" height="19.6" fill="#808285"/><rect x="0" y="77.80" width="19" height="0.6" fill="#000" opacity="0.12"/><rect x="0" y="97.25" width="19" height="19.6" fill="#939598"/><rect x="0" y="97.25" width="19" height="0.6" fill="#000" opacity="0.12"/><rect x="0" y="116.70" width="19" height="19.6" fill="#a7a9ac"/><rect x="0" y="116.70" width="19" height="0.6" fill="#000" opacity="0.12"/><rect x="0" y="136.15" width="19" height="19.6" fill="#bcbec0"/><rect x="0" y="136.15" width="19" height="0.6" fill="#000" opacity="0.12"/><rect x="0" y="155.60" width="19" height="19.6" fill="#d1d3d4"/><rect x="0" y="155.60" width="19" height="0.6" fill="#000" opacity="0.12"/><rect x="0" y="175.05" width="19" height="19.6" fill="#e6e7e8"/><rect x="0" y="175.05" width="19" height="0.6" fill="#000" opacity="0.12"/><rect x="0" y="194.50" width="19" height="19.6" fill="#ffffff"/><rect x="0" y="194.50" width="19" height="0.6" fill="#000" opacity="0.12"/><rect x="0" y="213.95" width="19" height="19.6" fill="#2e3192"/><rect x="0" y="213.95" width="19" height="0.6" fill="#000" opacity="0.12"/><rect x="0" y="233.40" width="19" height="19.6" fill="#00aeef"/><rect x="0" y="233.40" width="19" height="0.6" fill="#000" opacity="0.12"/><rect x="0" y="252.85" width="19" height="19.6" fill="#00a651"/><rect x="0" y="252.85" width="19" height="0.6" fill="#000" opacity="0.12"/><rect x="0" y="272.30" width="19" height="19.6" fill="#fff200"/><rect x="0" y="272.30" width="19" height="0.6" fill="#000" opacity="0.12"/><rect x="0" y="291.75" width="19" height="19.6" fill="#ed1c24"/><rect x="0" y="291.75" width="19" height="0.6" fill="#000" opacity="0.12"/><rect x="0" y="311.20" width="19" height="19.6" fill="#ec008c"/><rect x="0" y="311.20" width="19" height="0.6" fill="#000" opacity="0.12"/><rect x="0" y="330.65" width="19" height="19.6" fill="#92278f"/><rect x="0" y="330.65" width="19" height="0.6" fill="#000" opacity="0.12"/><rect x="0" y="350.10" width="19" height="19.6" fill="#f7941d"/><rect x="0" y="350.10" width="19" height="0.6" fill="#000" opacity="0.12"/><rect x="0" y="369.55" width="19" height="19.6" fill="#f5a3a8"/><rect x="0" y="369.55" width="19" height="0.6" fill="#000" opacity="0.12"/><rect x="0" y="389.00" width="19" height="19.6" fill="#8c6f65"/><rect x="0" y="389.00" width="19" height="0.6" fill="#000" opacity="0.12"/><rect x="0" y="408.45" width="19" height="19.6" fill="#c9c3e6"/><rect x="0" y="408.45" width="19" height="0.6" fill="#000" opacity="0.12"/><rect x="0" y="427.90" width="19" height="19.6" fill="#a09ad2"/><rect x="0" y="427.90" width="19" height="0.6" fill="#000" opacity="0.12"/><rect x="0" y="447.35" width="19" height="19.6" fill="#6b8fd0"/><rect x="0" y="447.35" width="19" height="0.6" fill="#000" opacity="0.12"/><rect x="0" y="466.80" width="19" height="19.6" fill="#7068b8"/><rect x="0" y="466.80" width="19" height="0.6" fill="#000" opacity="0.12"/><rect x="0" y="486.25" width="19" height="19.6" fill="#7b6fa6"/><rect x="0" y="486.25" width="19" height="0.6" fill="#000" opacity="0.12"/><rect x="0" y="505.70" width="19" height="19.6" fill="#3f5b8c"/><rect x="0" y="505.70" width="19" height="0.6" fill="#000" opacity="0.12"/><rect x="0" y="525.15" width="19" height="19.6" fill="#4a4566"/><rect x="0" y="525.15" width="19" height="0.6" fill="#000" opacity="0.12"/><rect x="0" y="544.60" width="19" height="19.6" fill="#5d7392"/><rect x="0" y="544.60" width="19" height="0.6" fill="#000" opacity="0.12"/><rect x="0" y="564.05" width="19" height="19.6" fill="#1b8fd8"/><rect x="0" y="564.05" width="19" height="0.6" fill="#000" opacity="0.12"/><rect x="0" y="583.50" width="19" height="19.6" fill="#8dd0f2"/><rect x="0" y="583.50" width="19" height="0.6" fill="#000" opacity="0.12"/><rect x="0" y="602.95" width="19" height="19.6" fill="#a5c0cc"/><rect x="0" y="602.95" width="19" height="0.6" fill="#000" opacity="0.12"/><rect x="0" y="622.40" width="19" height="19.6" fill="#8399a6"/><rect x="0" y="622.40" width="19" height="0.6" fill="#000" opacity="0.12"/><rect x="0" y="641.85" width="19" height="19.6" fill="#637a84"/><rect x="0" y="641.85" width="19" height="0.6" fill="#000" opacity="0.12"/><rect x="0" y="661.30" width="19" height="19.6" fill="#45565b"/><rect x="0" y="661.30" width="19" height="0.6" fill="#000" opacity="0.12"/><rect x="0" y="680.75" width="19" height="19.6" fill="#456f68"/><rect x="0" y="680.75" width="19" height="0.6" fill="#000" opacity="0.12"/><rect x="0" y="700.20" width="19" height="19.6" fill="#3f8874"/><rect x="0" y="700.20" width="19" height="0.6" fill="#000" opacity="0.12"/><rect x="0" y="719.65" width="19" height="19.6" fill="#5c9488"/><rect x="0" y="719.65" width="19" height="0.6" fill="#000" opacity="0.12"/><rect x="0" y="739.10" width="19" height="19.6" fill="#4aa58e"/><rect x="0" y="739.10" width="19" height="0.6" fill="#000" opacity="0.12"/></svg>
<div class="a" style="left:1574.5px;top:701.5px;width:19px;height:20px;background:transparent;border:1px solid #444;box-sizing:border-box;"></div>
<svg class="a" style="left:1576px;top:978px;" width="16" height="40" viewBox="0 0 16 40"><path d="M3,4 L8,9 L13,4" stroke="#cfcfcf" stroke-width="1.6" fill="none"/><path d="M3,20 L7,24 L3,28 M8,20 L12,24 L8,28" stroke="#c8c8c8" stroke-width="1.4" fill="none"/></svg>
<div class="a" style="left:6px;top:1021px;width:1588px;height:38px;background:#f2f2f2;"></div>
<div class="a" style="left:6px;top:1021px;width:1588px;height:1px;background:#d8d8d8;"></div>
<div class="a" style="left:6px;top:1059px;width:1588px;height:1px;background:#e8e8e8;"></div>
<div id="t53" class="a t" style="left:12px;top:1036.00px;font-size:13px;line-height:13px;color:#222;transform:scaleX(1.0133);">( 1,189 , 3,701 )</div>
<div class="a" style="left:113px;top:1033px;width:17px;height:17px;background:#ffffff;border:1px solid #333;box-sizing:border-box;"></div>
<svg class="a" style="left:113px;top:1033px;" width="17" height="17" viewBox="0 0 17 17"><path d="M6,4 L12,8.5 L6,13 Z" fill="#111"/></svg>
<svg class="a" style="left:1074px;top:1031px;" width="19" height="19" viewBox="0 0 19 19"><rect x="1" y="2" width="16" height="12" fill="#c9c9df" stroke="#666" stroke-width="1"/><circle cx="9" cy="8" r="3.5" fill="#fff" stroke="#556" stroke-width="1"/><circle cx="9" cy="8" r="1.5" fill="#556"/><path d="M5,17 L13,17" stroke="#777" stroke-width="1.3"/></svg>
<svg class="a" style="left:1106px;top:1031px;" width="21" height="19" viewBox="0 0 21 19"><path d="M3,9 L9,3 L16,10 L10,16 Z" fill="#fff" stroke="#333" stroke-width="1.2"/><path d="M3.5,10 L16,10 L10,16 Z" fill="#e8832a"/><path d="M16,10 Q19,13 18,16" stroke="#e8832a" stroke-width="2" fill="none"/></svg>
<div class="a" style="left:1133px;top:1032px;width:20px;height:20px;background:#ffffff;border:1px solid #555;box-sizing:border-box;"></div>
<svg class="a" style="left:1133px;top:1032px;" width="20" height="20" viewBox="0 0 20 20"><path d="M1,1 L19,19 M19,1 L1,19" stroke="#333" stroke-width="1.1"/></svg>
<div id="t54" class="a t" style="left:1156px;top:1035.57px;font-size:13.5px;line-height:13.5px;color:#222;transform:scaleX(1.0532);">None</div>
<div class="a" style="left:1341px;top:1028px;width:1px;height:26px;background:#d6d6d6;"></div>
<svg class="a" style="left:1349px;top:1032px;" width="14" height="19" viewBox="0 0 14 19"><path d="M7,1 L11,8 L9,14 L5,14 L3,8 Z" fill="#f4f4f8" stroke="#333" stroke-width="1.1"/><circle cx="7" cy="9" r="1.3" fill="#333"/><path d="M4,17 L10,17" stroke="#333" stroke-width="1.4"/></svg>
<div class="a" style="left:1372px;top:1032px;width:19px;height:19px;background:#231f20;"></div>
<div id="t55" class="a t" style="left:1396px;top:1036.00px;font-size:13px;line-height:13px;color:#222;transform:scaleX(0.9865);white-space:pre;">C:0 M:0 Y:0 K:100  0.200 mm</div>
</body></html>
